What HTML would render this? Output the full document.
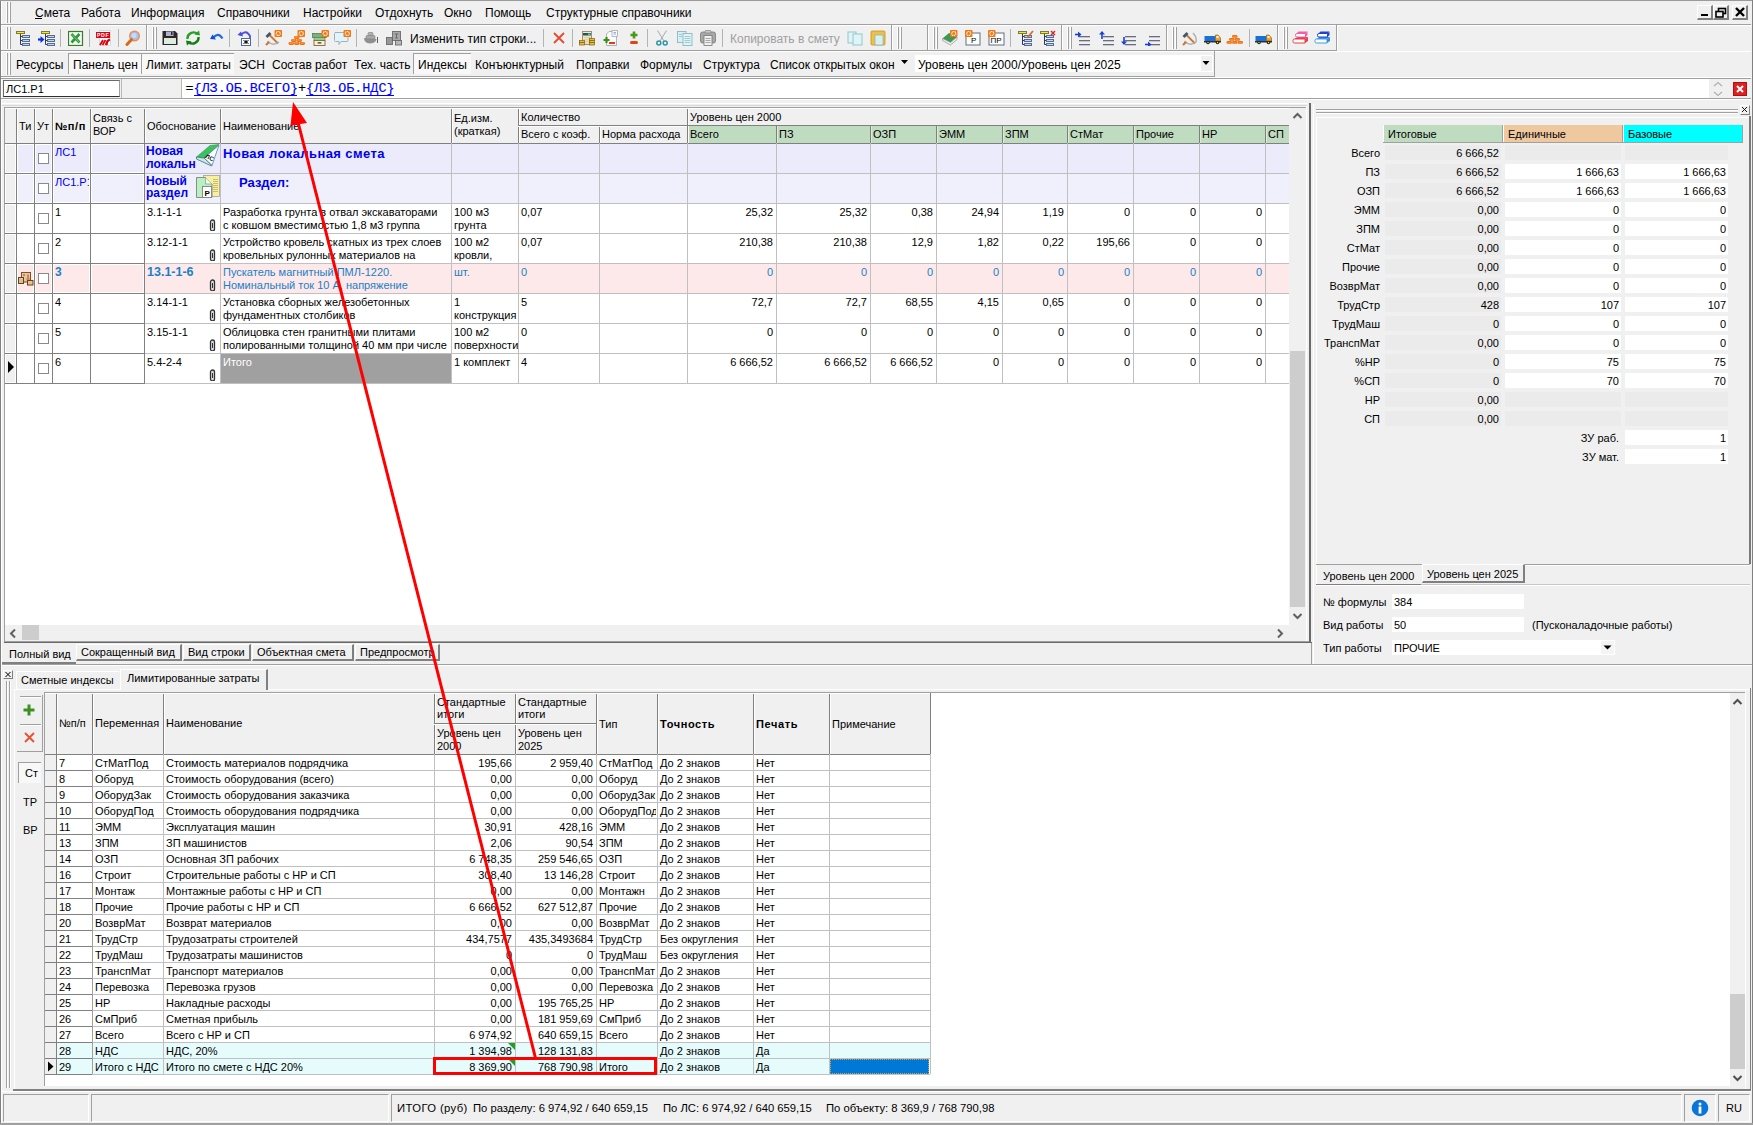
<!DOCTYPE html><html><head><meta charset="utf-8"><style>html,body{margin:0;padding:0;}body{width:1753px;height:1125px;overflow:hidden;position:relative;background:#f0f0f0;font-family:"Liberation Sans",sans-serif;}.a{position:absolute;}.t{white-space:pre;line-height:normal;}</style></head><body><div class="a" style="left:0px;top:0px;width:1px;height:1125px;background:#808080;"></div><div class="a" style="left:1px;top:0px;width:1px;height:1125px;background:#fff;"></div><div class="a" style="left:0px;top:0px;width:1753px;height:1px;background:#9a9a9a;"></div><div class="a" style="left:1752px;top:0px;width:1px;height:1125px;background:#808080;"></div><div class="a" style="left:0px;top:1123px;width:1753px;height:2px;background:#a0a0a0;"></div><div class="a" style="left:6px;top:2px;width:1px;height:21px;background:#fff;"></div><div class="a" style="left:7px;top:2px;width:1px;height:21px;background:#a0a0a0;"></div><div class="a" style="left:9px;top:2px;width:1px;height:21px;background:#fff;"></div><div class="a" style="left:10px;top:2px;width:1px;height:21px;background:#a0a0a0;"></div><div class="a t" style="left:35px;top:6.14px;font-size:12px;color:#000;font-family:'Liberation Sans', sans-serif;">Смета</div><div class="a t" style="left:81px;top:6.14px;font-size:12px;color:#000;font-family:'Liberation Sans', sans-serif;">Работа</div><div class="a t" style="left:131px;top:6.14px;font-size:12px;color:#000;font-family:'Liberation Sans', sans-serif;">Информация</div><div class="a t" style="left:217px;top:6.14px;font-size:12px;color:#000;font-family:'Liberation Sans', sans-serif;">Справочники</div><div class="a t" style="left:303px;top:6.14px;font-size:12px;color:#000;font-family:'Liberation Sans', sans-serif;">Настройки</div><div class="a t" style="left:375px;top:6.14px;font-size:12px;color:#000;font-family:'Liberation Sans', sans-serif;">Отдохнуть</div><div class="a t" style="left:444px;top:6.14px;font-size:12px;color:#000;font-family:'Liberation Sans', sans-serif;">Окно</div><div class="a t" style="left:485px;top:6.14px;font-size:12px;color:#000;font-family:'Liberation Sans', sans-serif;">Помощь</div><div class="a t" style="left:546px;top:6.14px;font-size:12px;color:#000;font-family:'Liberation Sans', sans-serif;">Структурные справочники</div><div class="a" style="left:35px;top:18px;width:7px;height:1px;background:#000;"></div><div class="a" style="left:1px;top:24px;width:1750px;height:1px;background:#a0a0a0;"></div><div class="a" style="left:2px;top:25px;width:1749px;height:1px;background:#fff;"></div><div class="a" style="left:1697px;top:5px;width:16px;height:15px;background:#f0f0f0;border-top:1px solid #fff;border-left:1px solid #fff;border-right:2px solid #808080;border-bottom:2px solid #808080;box-sizing:border-box;"></div><div class="a" style="left:1713px;top:5px;width:16px;height:15px;background:#f0f0f0;border-top:1px solid #fff;border-left:1px solid #fff;border-right:2px solid #808080;border-bottom:2px solid #808080;box-sizing:border-box;"></div><div class="a" style="left:1732px;top:5px;width:16px;height:15px;background:#f0f0f0;border-top:1px solid #fff;border-left:1px solid #fff;border-right:2px solid #808080;border-bottom:2px solid #808080;box-sizing:border-box;"></div><svg class="a" style="left:1697px;top:5px" width="16" height="15" viewBox="0 0 16 15"><rect x="4" y="9" width="7" height="2" fill="#000"/></svg><svg class="a" style="left:1713px;top:5px" width="16" height="15" viewBox="0 0 16 15"><rect x="5.5" y="3.5" width="7" height="5" fill="none" stroke="#000" stroke-width="1.6"/><rect x="3" y="6.5" width="7" height="5.5" fill="#f0f0f0" stroke="#000" stroke-width="1.6"/></svg><svg class="a" style="left:1732px;top:5px" width="17" height="15" viewBox="0 0 17 15"><path d="M4 3 L12 11 M12 3 L4 11" stroke="#000" stroke-width="2.4"/></svg><div class="a" style="left:1px;top:50px;width:1336px;height:1px;background:#a0a0a0;"></div><div class="a" style="left:2px;top:51px;width:1749px;height:1px;background:#fff;"></div><div class="a" style="left:146px;top:25px;width:1px;height:26px;background:#a0a0a0;"></div><div class="a" style="left:147px;top:26px;width:1px;height:24px;background:#fff;"></div><div class="a" style="left:6px;top:27px;width:1px;height:22px;background:#fff;"></div><div class="a" style="left:7px;top:27px;width:1px;height:22px;background:#a0a0a0;"></div><div class="a" style="left:9px;top:27px;width:1px;height:22px;background:#fff;"></div><div class="a" style="left:10px;top:27px;width:1px;height:22px;background:#a0a0a0;"></div><div class="a" style="left:891px;top:25px;width:1px;height:26px;background:#a0a0a0;"></div><div class="a" style="left:892px;top:26px;width:1px;height:24px;background:#fff;"></div><div class="a" style="left:152px;top:27px;width:1px;height:22px;background:#fff;"></div><div class="a" style="left:153px;top:27px;width:1px;height:22px;background:#a0a0a0;"></div><div class="a" style="left:155px;top:27px;width:1px;height:22px;background:#fff;"></div><div class="a" style="left:156px;top:27px;width:1px;height:22px;background:#a0a0a0;"></div><div class="a" style="left:927px;top:25px;width:1px;height:26px;background:#a0a0a0;"></div><div class="a" style="left:928px;top:26px;width:1px;height:24px;background:#fff;"></div><div class="a" style="left:897px;top:27px;width:1px;height:22px;background:#fff;"></div><div class="a" style="left:898px;top:27px;width:1px;height:22px;background:#a0a0a0;"></div><div class="a" style="left:900px;top:27px;width:1px;height:22px;background:#fff;"></div><div class="a" style="left:901px;top:27px;width:1px;height:22px;background:#a0a0a0;"></div><div class="a" style="left:1061px;top:25px;width:1px;height:26px;background:#a0a0a0;"></div><div class="a" style="left:1062px;top:26px;width:1px;height:24px;background:#fff;"></div><div class="a" style="left:933px;top:27px;width:1px;height:22px;background:#fff;"></div><div class="a" style="left:934px;top:27px;width:1px;height:22px;background:#a0a0a0;"></div><div class="a" style="left:936px;top:27px;width:1px;height:22px;background:#fff;"></div><div class="a" style="left:937px;top:27px;width:1px;height:22px;background:#a0a0a0;"></div><div class="a" style="left:1166px;top:25px;width:1px;height:26px;background:#a0a0a0;"></div><div class="a" style="left:1167px;top:26px;width:1px;height:24px;background:#fff;"></div><div class="a" style="left:1067px;top:27px;width:1px;height:22px;background:#fff;"></div><div class="a" style="left:1068px;top:27px;width:1px;height:22px;background:#a0a0a0;"></div><div class="a" style="left:1070px;top:27px;width:1px;height:22px;background:#fff;"></div><div class="a" style="left:1071px;top:27px;width:1px;height:22px;background:#a0a0a0;"></div><div class="a" style="left:1277px;top:25px;width:1px;height:26px;background:#a0a0a0;"></div><div class="a" style="left:1278px;top:26px;width:1px;height:24px;background:#fff;"></div><div class="a" style="left:1172px;top:27px;width:1px;height:22px;background:#fff;"></div><div class="a" style="left:1173px;top:27px;width:1px;height:22px;background:#a0a0a0;"></div><div class="a" style="left:1175px;top:27px;width:1px;height:22px;background:#fff;"></div><div class="a" style="left:1176px;top:27px;width:1px;height:22px;background:#a0a0a0;"></div><div class="a" style="left:1336px;top:25px;width:1px;height:26px;background:#a0a0a0;"></div><div class="a" style="left:1337px;top:26px;width:1px;height:24px;background:#fff;"></div><div class="a" style="left:1283px;top:27px;width:1px;height:22px;background:#fff;"></div><div class="a" style="left:1284px;top:27px;width:1px;height:22px;background:#a0a0a0;"></div><div class="a" style="left:1286px;top:27px;width:1px;height:22px;background:#fff;"></div><div class="a" style="left:1287px;top:27px;width:1px;height:22px;background:#a0a0a0;"></div><div class="a" style="left:60px;top:29px;width:1px;height:18px;background:#b4b4b4;"></div><div class="a" style="left:89px;top:29px;width:1px;height:18px;background:#b4b4b4;"></div><div class="a" style="left:118px;top:29px;width:1px;height:18px;background:#b4b4b4;"></div><div class="a" style="left:229px;top:29px;width:1px;height:18px;background:#b4b4b4;"></div><div class="a" style="left:258px;top:29px;width:1px;height:18px;background:#b4b4b4;"></div><div class="a" style="left:356px;top:29px;width:1px;height:18px;background:#b4b4b4;"></div><div class="a" style="left:543px;top:29px;width:1px;height:18px;background:#b4b4b4;"></div><div class="a" style="left:572px;top:29px;width:1px;height:18px;background:#b4b4b4;"></div><div class="a" style="left:647px;top:29px;width:1px;height:18px;background:#b4b4b4;"></div><div class="a" style="left:722px;top:29px;width:1px;height:18px;background:#b4b4b4;"></div><div class="a" style="left:1010px;top:29px;width:1px;height:18px;background:#b4b4b4;"></div><div class="a" style="left:1249px;top:29px;width:1px;height:18px;background:#b4b4b4;"></div><svg class="a" style="left:16px;top:30px" width="17" height="16" viewBox="0 0 17 16"><rect x="0.5" y="1.5" width="8" height="2" fill="#f8f000" stroke="#807840" stroke-width="1"/><path d="M4.5 4 V14.5 H6 M4.5 6.5 H6 M4.5 10.5 H6" stroke="#283868" stroke-width="1" fill="none"/><rect x="6.5" y="5.5" width="7" height="2" fill="#b8d8f8" stroke="#5a6a90" stroke-width="1"/><rect x="6.5" y="9.5" width="7" height="2" fill="#b8d8f8" stroke="#5a6a90" stroke-width="1"/><rect x="6.5" y="13.5" width="7" height="2" fill="#b8d8f8" stroke="#5a6a90" stroke-width="1"/></svg><svg class="a" style="left:38px;top:30px" width="17" height="16" viewBox="0 0 17 16"><rect x="3.5" y="1.5" width="8" height="2" fill="#f8f000" stroke="#807840" stroke-width="1"/><path d="M7.5 4 V14.5 H9 M7.5 6.5 H9 M7.5 10.5 H9" stroke="#283868" stroke-width="1" fill="none"/><rect x="9.5" y="5.5" width="7" height="2" fill="#b8d8f8" stroke="#5a6a90" stroke-width="1"/><rect x="9.5" y="9.5" width="7" height="2" fill="#b8d8f8" stroke="#5a6a90" stroke-width="1"/><rect x="9.5" y="13.5" width="7" height="2" fill="#b8d8f8" stroke="#5a6a90" stroke-width="1"/><path d="M0 9.5 H3.5" stroke="#1030e0" stroke-width="2.2"/><path d="M2.5 6 L6.5 9.5 L2.5 13Z" fill="#1030e0"/></svg><svg class="a" style="left:68px;top:30px" width="16" height="16" viewBox="0 0 16 16"><rect x="0.5" y="1.5" width="14" height="14" fill="#f4f8f0" stroke="#3a7a2a" stroke-width="1.2"/><path d="M3.5 4 L11.5 12.5 M11.5 4 L3.5 12.5" stroke="#2a9a3a" stroke-width="2.6"/><path d="M4 4.5 L11 12" stroke="#90d090" stroke-width="0.8"/></svg><svg class="a" style="left:96px;top:30px" width="16" height="16" viewBox="0 0 16 16"><rect x="3.5" y="0.5" width="11" height="15" fill="#fff" stroke="#c8d8d8" stroke-width="0.8"/><rect x="0" y="2" width="14" height="6" fill="#e00010"/><text x="1" y="7" font-size="5.2" font-family="Liberation Sans" font-weight="700" fill="#fff" letter-spacing="0.6">PDF</text><path d="M4 15 L7 10 M6.5 15 L9.5 10 M9.5 15 L12 10.5" stroke="#e00010" stroke-width="1.8"/><path d="M14 9.5 Q10 11 11 15" stroke="#e00010" stroke-width="2" fill="none"/></svg><svg class="a" style="left:125px;top:30px" width="16" height="16" viewBox="0 0 16 16"><circle cx="9.5" cy="6" r="4.8" fill="#a8c0f0" stroke="#e89050" stroke-width="1.4"/><circle cx="9" cy="5.5" r="2.5" fill="#c8d8f8"/><path d="M2 14.5 L6.5 9.5" stroke="#d86a18" stroke-width="3" stroke-linecap="round"/></svg><svg class="a" style="left:162px;top:30px" width="16" height="16" viewBox="0 0 16 16"><path d="M0.5 1 H13 L15.5 3.5 V15 H0.5Z" fill="#282828"/><rect x="4" y="1.5" width="7.5" height="4.5" fill="#b0b0d0"/><rect x="9" y="2" width="1.5" height="3" fill="#282828"/><rect x="2" y="8" width="12" height="6" fill="#d8eee8"/><rect x="2" y="8" width="12" height="1.5" fill="#f8e0b8"/></svg><svg class="a" style="left:185px;top:30px" width="16" height="16" viewBox="0 0 16 16"><path d="M12.5 4 A6 6 0 0 0 2.5 9" stroke="#28a028" stroke-width="2.4" fill="none"/><path d="M3.5 12 A6 6 0 0 0 13.5 7" stroke="#108010" stroke-width="2.4" fill="none"/><path d="M9.5 4.5 L15 5.5 L14 0.5Z" fill="#28a028"/><path d="M6.5 11.5 L1 10.5 L2 15.5Z" fill="#108010"/></svg><svg class="a" style="left:209px;top:30px" width="16" height="16" viewBox="0 0 16 16"><path d="M4 8 Q9 1.5 13.5 8.5" stroke="#1a6ae0" stroke-width="2.2" fill="none"/><path d="M1 9 L7 9.5 L3.5 4.5Z" fill="#1050d0"/></svg><svg class="a" style="left:237px;top:30px" width="16" height="16" viewBox="0 0 16 16"><path d="M4 5 Q9 -1 13 6 V9" stroke="#5050e0" stroke-width="1.8" fill="none"/><path d="M0.5 5 L6 6.5 L4 1.5Z" fill="#4848e0"/><rect x="4.5" y="8.5" width="9" height="7" fill="#fff" stroke="#5068a0" stroke-width="1"/><path d="M6.5 10.5 L11.5 13.5 M11.5 10.5 L6.5 13.5 M9 10 V14" stroke="#000" stroke-width="1"/></svg><svg class="a" style="left:265px;top:30px" width="18" height="16" viewBox="0 0 18 16"><path d="M4 4.5 L13 13.5" stroke="#c87830" stroke-width="1.8"/><path d="M1.5 7 L5.5 3" stroke="#405868" stroke-width="2.8"/><path d="M2.5 11 Q8 17 14 12" stroke="#a8b0b8" stroke-width="1.4" fill="none"/><path d="M1 15 L4 12" stroke="#d07020" stroke-width="2"/><rect x="9.5" y="0" width="7.5" height="7" rx="1" fill="#f07810"/><circle cx="13.25" cy="3.5" r="2" fill="none" stroke="#fff" stroke-width="1.2" stroke-dasharray="1 0.6"/></svg><svg class="a" style="left:288px;top:30px" width="17" height="16" viewBox="0 0 17 16"><rect x="0.5" y="12" width="5.5" height="3" rx="1.4" fill="#f07010"/><rect x="1.5" y="12.6" width="3.5" height="1" rx="0.5" fill="#f8a860"/><rect x="6" y="12" width="5.5" height="3" rx="1.4" fill="#f07010"/><rect x="7" y="12.6" width="3.5" height="1" rx="0.5" fill="#f8a860"/><rect x="11.5" y="12" width="5.5" height="3" rx="1.4" fill="#f07010"/><rect x="12.5" y="12.6" width="3.5" height="1" rx="0.5" fill="#f8a860"/><rect x="3" y="9" width="5.5" height="3" rx="1.4" fill="#f07010"/><rect x="4" y="9.6" width="3.5" height="1" rx="0.5" fill="#f8a860"/><rect x="8.5" y="9" width="5.5" height="3" rx="1.4" fill="#f07010"/><rect x="9.5" y="9.6" width="3.5" height="1" rx="0.5" fill="#f8a860"/><rect x="6" y="6" width="5.5" height="3" rx="1.4" fill="#f07010"/><rect x="7" y="6.6" width="3.5" height="1" rx="0.5" fill="#f8a860"/><rect x="9.5" y="0" width="7.5" height="7" rx="1" fill="#f07810"/><circle cx="13.25" cy="3.5" r="2" fill="none" stroke="#fff" stroke-width="1.2" stroke-dasharray="1 0.6"/></svg><svg class="a" style="left:312px;top:30px" width="17" height="16" viewBox="0 0 17 16"><rect x="0.5" y="3.5" width="14" height="4" fill="#80b080" stroke="#508050" stroke-width="0.8"/><rect x="2" y="7.5" width="11" height="3" fill="#98c898" stroke="#508050" stroke-width="0.6"/><rect x="2" y="10.5" width="11" height="5" fill="#f8f0d0" stroke="#806840" stroke-width="0.9"/><rect x="5.5" y="12.2" width="4" height="1.4" rx="0.7" fill="#204020"/><rect x="9.5" y="0" width="7.5" height="7" rx="1" fill="#f07810"/><circle cx="13.25" cy="3.5" r="2" fill="none" stroke="#fff" stroke-width="1.2" stroke-dasharray="1 0.6"/></svg><svg class="a" style="left:334px;top:30px" width="17" height="16" viewBox="0 0 17 16"><path d="M1 2.5 H13 Q14 2.5 14 3.5 V10.5 Q14 11.5 13 11.5 H7 L5 14.5 V11.5 H1.5 Q0.5 11.5 0.5 10.5 V3.5 Q0.5 2.5 1.5 2.5Z" fill="#e0f4fc" stroke="#a0b0b8" stroke-width="1"/><rect x="9.5" y="0" width="7.5" height="7" rx="1" fill="#f07810"/><circle cx="13.25" cy="3.5" r="2" fill="none" stroke="#fff" stroke-width="1.2" stroke-dasharray="1 0.6"/></svg><svg class="a" style="left:362px;top:30px" width="17" height="16" viewBox="0 0 17 16"><path d="M2 8 Q2 13 8 13.5 Q14 13 14.5 9 Z" fill="#909090"/><rect x="4" y="5.5" width="9" height="3.5" rx="1" fill="#a8a8a8" stroke="#808080" stroke-width="0.6"/><rect x="6" y="2.5" width="5" height="3" rx="1" fill="#b0b0b0" stroke="#808080" stroke-width="0.6"/><path d="M15.5 7 V13" stroke="#606060" stroke-width="1"/></svg><svg class="a" style="left:386px;top:30px" width="17" height="16" viewBox="0 0 17 16"><rect x="6.5" y="1.5" width="8" height="9" fill="#a8a8a8" stroke="#6a6a6a" stroke-width="0.9"/><path d="M8.5 4 H12.5 M10.5 4 V8 M9 8 H12" stroke="#606060" stroke-width="0.8"/><rect x="0.5" y="7.5" width="6" height="7" fill="#989898" stroke="#6a6a6a" stroke-width="0.9"/><rect x="9.5" y="10.5" width="6" height="4.5" fill="#b8b8b8" stroke="#6a6a6a" stroke-width="0.9"/></svg><div class="a t" style="left:410px;top:32.14px;font-size:12px;color:#000;font-family:'Liberation Sans', sans-serif;">Изменить тип строки...</div><svg class="a" style="left:552px;top:30px" width="16" height="16" viewBox="0 0 16 16"><path d="M2 3 L12 13 M12 3 L2 13" stroke="#e84830" stroke-width="1.8"/></svg><svg class="a" style="left:579px;top:30px" width="17" height="16" viewBox="0 0 17 16"><rect x="3.5" y="1.5" width="9" height="13" fill="#f4ecc8" stroke="#a08070" stroke-width="0.9"/><rect x="4" y="3" width="8" height="2.5" fill="#205858"/><rect x="9" y="3.5" width="2.5" height="1.5" fill="#40d0e0"/><path d="M4 7.5 H12 M4 9.5 H12 M4 11.5 H12 M6 6 V14 M8 6 V14 M10 6 V14" stroke="#d8c898" stroke-width="0.6"/><rect x="0.5" y="10.5" width="5" height="2" fill="#e0c040" stroke="#806010" stroke-width="0.7"/><rect x="0.5" y="12.5" width="5" height="2.5" fill="#e0c040" stroke="#806010" stroke-width="0.7"/><rect x="10.5" y="8.5" width="5" height="2" fill="#e0c040" stroke="#806010" stroke-width="0.7"/><rect x="10.5" y="10.5" width="5" height="2" fill="#e0c040" stroke="#806010" stroke-width="0.7"/><rect x="10.5" y="12.5" width="5" height="2.5" fill="#e0c040" stroke="#806010" stroke-width="0.7"/></svg><svg class="a" style="left:603px;top:30px" width="16" height="16" viewBox="0 0 16 16"><path d="M3.5 4 L6 1.5 H13.5 V15.5 H3.5Z" fill="#fafafa" stroke="#a8a8a8" stroke-width="0.9"/><rect x="9" y="0.5" width="5.5" height="6" fill="#f4f8ff" stroke="#a0a0a0" stroke-width="0.7"/><path d="M10.5 2.5 H13 M10.5 4 H13" stroke="#5a7ae0" stroke-width="0.6"/><path d="M0.5 10 H6.5 M3.5 7 V13" stroke="#3a9018" stroke-width="2.2"/><rect x="6" y="12" width="6" height="2" fill="#e83818"/></svg><svg class="a" style="left:629px;top:30px" width="10" height="16" viewBox="0 0 10 16"><path d="M1.5 5 H8.5 M5 1.5 V8.5" stroke="#4a9818" stroke-width="2.6"/><rect x="1" y="11" width="8" height="3" rx="1.5" fill="#e84018"/></svg><svg class="a" style="left:655px;top:30px" width="15" height="16" viewBox="0 0 15 16"><path d="M2.5 0.5 L9 11 M11.5 0.5 L5 11" stroke="#a8a8a8" stroke-width="1"/><circle cx="3.8" cy="13" r="2" fill="none" stroke="#2898a8" stroke-width="1.5"/><circle cx="10.2" cy="13" r="2" fill="none" stroke="#2898a8" stroke-width="1.5"/></svg><svg class="a" style="left:677px;top:30px" width="16" height="16" viewBox="0 0 16 16"><rect x="0.5" y="1.5" width="8.5" height="11" fill="#d8f0f4" stroke="#88b8c0" stroke-width="0.9"/><rect x="6" y="3.5" width="9" height="12" fill="#e0f4f8" stroke="#88b8c0" stroke-width="0.9"/><path d="M7.5 6.5 H13.5 M7.5 8.5 H13.5 M7.5 10.5 H13.5 M7.5 12.5 H13.5" stroke="#88b8c0" stroke-width="0.7"/><path d="M2 4.5 H5 M2 6.5 H5" stroke="#88b8c0" stroke-width="0.7"/></svg><svg class="a" style="left:700px;top:30px" width="16" height="16" viewBox="0 0 16 16"><rect x="0.5" y="2" width="15" height="11" rx="2" fill="#a8a8a8" stroke="#787878" stroke-width="0.8"/><rect x="5" y="0.5" width="6" height="2.5" rx="1" fill="#c8c8c8" stroke="#787878" stroke-width="0.6"/><rect x="4" y="5.5" width="8" height="10" fill="#f0f0f0" stroke="#787878" stroke-width="0.8"/><path d="M5.5 8.5 H10.5 M5.5 10.5 H10.5 M5.5 12.5 H10.5" stroke="#888" stroke-width="0.7"/></svg><div class="a t" style="left:730px;top:32.14px;font-size:12px;color:#a0a0a0;font-family:'Liberation Sans', sans-serif;">Копировать в смету</div><svg class="a" style="left:847px;top:30px" width="16" height="16" viewBox="0 0 16 16"><rect x="1" y="2" width="8" height="11" fill="#e0f4f8" stroke="#90c8d0" stroke-width="1"/><rect x="6" y="4" width="9" height="11" fill="#e0f4f8" stroke="#90c8d0" stroke-width="1"/></svg><svg class="a" style="left:870px;top:30px" width="16" height="16" viewBox="0 0 16 16"><rect x="1" y="1" width="14" height="14" rx="1" fill="#f0c040" stroke="#c89020" stroke-width="0.8"/><rect x="5" y="5" width="8" height="10" fill="#d8f0f4" stroke="#88b8c0" stroke-width="0.8"/></svg><svg class="a" style="left:942px;top:30px" width="16" height="16" viewBox="0 0 16 16"><path d="M0.5 8.5 L7 3 L15 7 L8.5 12.5Z" fill="#3a9a50"/><path d="M0.5 8.5 V10.5 L8.5 15 L15 9.5 V7 L8.5 12.5Z" fill="#f0f0f0" stroke="#909090" stroke-width="0.7"/><rect x="8" y="0" width="7.5" height="7" rx="1" fill="#f07810"/><circle cx="11.75" cy="3.5" r="2" fill="none" stroke="#fff" stroke-width="1.2" stroke-dasharray="1 0.6"/></svg><svg class="a" style="left:965px;top:30px" width="16" height="16" viewBox="0 0 16 16"><rect x="1" y="3" width="14" height="12" fill="#fff" stroke="#5a7080" stroke-width="1"/><text x="6" y="13" font-size="8" font-family="Liberation Sans" fill="#000">P</text><rect x="0" y="0" width="7.5" height="7" rx="1" fill="#f07810"/><circle cx="3.75" cy="3.5" r="2" fill="none" stroke="#fff" stroke-width="1.2" stroke-dasharray="1 0.6"/></svg><svg class="a" style="left:988px;top:30px" width="17" height="16" viewBox="0 0 17 16"><rect x="1" y="3" width="15" height="12" fill="#fff" stroke="#5a7080" stroke-width="1"/><text x="2.5" y="13" font-size="8" font-family="Liberation Sans" fill="#000">ПР</text><rect x="0" y="0" width="7.5" height="7" rx="1" fill="#f07810"/><circle cx="3.75" cy="3.5" r="2" fill="none" stroke="#fff" stroke-width="1.2" stroke-dasharray="1 0.6"/></svg><svg class="a" style="left:1018px;top:30px" width="17" height="16" viewBox="0 0 17 16"><rect x="0.5" y="1.5" width="8" height="2" fill="#f8f000" stroke="#807840" stroke-width="1"/><path d="M4.5 4 V14.5 H6 M4.5 6.5 H6 M4.5 10.5 H6" stroke="#283868" stroke-width="1" fill="none"/><rect x="6.5" y="5.5" width="7" height="2" fill="#b8d8f8" stroke="#5a6a90" stroke-width="1"/><rect x="6.5" y="9.5" width="7" height="2" fill="#b8d8f8" stroke="#5a6a90" stroke-width="1"/><rect x="6.5" y="13.5" width="7" height="2" fill="#b8d8f8" stroke="#5a6a90" stroke-width="1"/><path d="M9 8 L15 1" stroke="#d07030" stroke-width="1.8"/></svg><svg class="a" style="left:1040px;top:30px" width="17" height="16" viewBox="0 0 17 16"><rect x="0.5" y="1.5" width="8" height="2" fill="#f8f000" stroke="#807840" stroke-width="1"/><path d="M4.5 4 V14.5 H6 M4.5 6.5 H6 M4.5 10.5 H6" stroke="#283868" stroke-width="1" fill="none"/><rect x="6.5" y="5.5" width="7" height="2" fill="#b8d8f8" stroke="#5a6a90" stroke-width="1"/><rect x="6.5" y="9.5" width="7" height="2" fill="#b8d8f8" stroke="#5a6a90" stroke-width="1"/><rect x="6.5" y="13.5" width="7" height="2" fill="#b8d8f8" stroke="#5a6a90" stroke-width="1"/><path d="M11 1 L15 5 M15 1 L11 5" stroke="#e02020" stroke-width="1.4"/></svg><svg class="a" style="left:1075px;top:30px" width="16" height="16" viewBox="0 0 16 16"><rect x="4" y="6" width="11" height="1.3" fill="#6a6a80"/><rect x="4" y="10" width="11" height="1.3" fill="#6a6a80"/><rect x="4" y="14" width="11" height="1.3" fill="#6a6a80"/><path d="M0 4.5 H4" stroke="#1a40d0" stroke-width="1.6"/><path d="M3 1.5 L6.5 4.5 L3 7.5Z" fill="#1a40d0"/></svg><svg class="a" style="left:1099px;top:30px" width="16" height="16" viewBox="0 0 16 16"><rect x="4" y="6" width="11" height="1.3" fill="#6a6a80"/><rect x="4" y="10" width="11" height="1.3" fill="#6a6a80"/><rect x="4" y="14" width="11" height="1.3" fill="#6a6a80"/><path d="M3 9 V4" stroke="#1a40d0" stroke-width="1.6"/><path d="M0 4.5 L3 1 L6 4.5Z" fill="#1a40d0"/></svg><svg class="a" style="left:1121px;top:30px" width="16" height="16" viewBox="0 0 16 16"><rect x="4" y="6" width="11" height="1.3" fill="#6a6a80"/><rect x="4" y="10" width="11" height="1.3" fill="#6a6a80"/><rect x="4" y="14" width="11" height="1.3" fill="#6a6a80"/><path d="M3 7 V12" stroke="#1a40d0" stroke-width="1.6"/><path d="M0 11.5 L3 15 L6 11.5Z" fill="#1a40d0"/></svg><svg class="a" style="left:1145px;top:30px" width="16" height="16" viewBox="0 0 16 16"><rect x="4" y="6" width="11" height="1.3" fill="#6a6a80"/><rect x="4" y="10" width="11" height="1.3" fill="#6a6a80"/><rect x="4" y="14" width="11" height="1.3" fill="#6a6a80"/><path d="M0 14.5 H4" stroke="#1a40d0" stroke-width="1.6"/><path d="M3 11.5 L6.5 14.5 L3 17.5Z" fill="#1a40d0"/></svg><svg class="a" style="left:1182px;top:30px" width="16" height="16" viewBox="0 0 16 16"><path d="M4 4.5 L13 13.5" stroke="#c87830" stroke-width="1.8"/><path d="M1.5 7 L5.5 3" stroke="#405868" stroke-width="2.8"/><path d="M2.5 11 Q8 17 14 12 Q15 7 11 3" stroke="#a8b0b8" stroke-width="1.4" fill="none"/><path d="M1 15 L4 12" stroke="#d07020" stroke-width="2"/></svg><svg class="a" style="left:1204px;top:30px" width="18" height="16" viewBox="0 0 18 16"><rect x="0.5" y="6" width="11" height="5" fill="#1a70d8"/><path d="M11.5 5 H14 L16.5 8 V11 H11.5Z" fill="#f8a020" stroke="#805010" stroke-width="0.6"/><rect x="12.5" y="6" width="2" height="2" fill="#fff"/><rect x="0" y="11" width="17" height="1.5" fill="#303030"/><circle cx="4" cy="12.5" r="1.8" fill="#202020"/><circle cx="4" cy="12.5" r="0.7" fill="#f0f000"/><circle cx="13.5" cy="12.5" r="1.8" fill="#202020"/><circle cx="13.5" cy="12.5" r="0.7" fill="#f0f000"/></svg><svg class="a" style="left:1226px;top:30px" width="17" height="16" viewBox="0 0 17 16"><rect x="0.5" y="11" width="5.5" height="3" rx="1.4" fill="#f07010"/><rect x="1.5" y="12.6" width="3.5" height="1" rx="0.5" fill="#f8a860"/><rect x="6" y="11" width="5.5" height="3" rx="1.4" fill="#f07010"/><rect x="7" y="12.6" width="3.5" height="1" rx="0.5" fill="#f8a860"/><rect x="11.5" y="11" width="5.5" height="3" rx="1.4" fill="#f07010"/><rect x="12.5" y="12.6" width="3.5" height="1" rx="0.5" fill="#f8a860"/><rect x="3" y="8" width="5.5" height="3" rx="1.4" fill="#f07010"/><rect x="4" y="9.6" width="3.5" height="1" rx="0.5" fill="#f8a860"/><rect x="8.5" y="8" width="5.5" height="3" rx="1.4" fill="#f07010"/><rect x="9.5" y="9.6" width="3.5" height="1" rx="0.5" fill="#f8a860"/><rect x="6" y="5" width="5.5" height="3" rx="1.4" fill="#f07010"/><rect x="7" y="6.6" width="3.5" height="1" rx="0.5" fill="#f8a860"/></svg><svg class="a" style="left:1255px;top:30px" width="18" height="16" viewBox="0 0 18 16"><rect x="0.5" y="6" width="11" height="5" fill="#1a70d8"/><path d="M11.5 5 H14 L16.5 8 V11 H11.5Z" fill="#f8a020" stroke="#805010" stroke-width="0.6"/><rect x="12.5" y="6" width="2" height="2" fill="#fff"/><rect x="0" y="11" width="17" height="1.5" fill="#303030"/><circle cx="4" cy="12.5" r="1.8" fill="#202020"/><circle cx="4" cy="12.5" r="0.7" fill="#f0f000"/><circle cx="13.5" cy="12.5" r="1.8" fill="#202020"/><circle cx="13.5" cy="12.5" r="0.7" fill="#f0f000"/></svg><svg class="a" style="left:1292px;top:30px" width="17" height="16" viewBox="0 0 17 16"><path d="M2.5 9 L5.5 7 H16 L13 9Z" fill="#e84050"/><path d="M1 10.5 Q1 9 2.5 9 H13 L13 13 H2.5 Q1 13 1 11.5Z" fill="#fff" stroke="#e04040" stroke-width="1"/><path d="M13 9 L16 7 V11 L13 13Z" fill="#e84050"/><path d="M4.5 3.5 L6.5 1.5 H15.5 L13.5 3.5Z" fill="#f060a8"/><path d="M3.5 5 Q3.5 3.5 5 3.5 H13.5 V7 H5 Q3.5 7 3.5 5.5Z" fill="#fff" stroke="#f060a8" stroke-width="1"/><path d="M13.5 3.5 L15.5 1.5 V5 L13.5 7Z" fill="#f060a8"/></svg><svg class="a" style="left:1314px;top:30px" width="17" height="16" viewBox="0 0 17 16"><path d="M2.5 9 L5.5 7 H16 L13 9Z" fill="#3890e0"/><path d="M1 10.5 Q1 9 2.5 9 H13 L13 13 H2.5 Q1 13 1 11.5Z" fill="#fff" stroke="#30a0e0" stroke-width="1"/><path d="M13 9 L16 7 V11 L13 13Z" fill="#3890e0"/><path d="M4.5 3.5 L6.5 1.5 H15.5 L13.5 3.5Z" fill="#2040d0"/><path d="M3.5 5 Q3.5 3.5 5 3.5 H13.5 V7 H5 Q3.5 7 3.5 5.5Z" fill="#fff" stroke="#2040d0" stroke-width="1"/><path d="M13.5 3.5 L15.5 1.5 V5 L13.5 7Z" fill="#2040d0"/></svg><div class="a" style="left:1px;top:76px;width:1214px;height:1px;background:#a0a0a0;"></div><div class="a" style="left:2px;top:77px;width:1749px;height:1px;background:#fff;"></div><div class="a" style="left:1px;top:78px;width:1750px;height:1px;background:#a0a0a0;"></div><div class="a" style="left:6px;top:53px;width:1px;height:22px;background:#fff;"></div><div class="a" style="left:7px;top:53px;width:1px;height:22px;background:#a0a0a0;"></div><div class="a" style="left:9px;top:53px;width:1px;height:22px;background:#fff;"></div><div class="a" style="left:10px;top:53px;width:1px;height:22px;background:#a0a0a0;"></div><div class="a" style="left:1214px;top:51px;width:1px;height:26px;background:#a0a0a0;"></div><div class="a" style="left:68px;top:53px;width:73px;height:21px;background:#f8f8f8;border-top:1px solid #a0a0a0;border-left:1px solid #a0a0a0;box-sizing:border-box;"></div><div class="a" style="left:141px;top:53px;width:93px;height:21px;background:#f8f8f8;border-top:1px solid #a0a0a0;border-left:1px solid #a0a0a0;box-sizing:border-box;"></div><div class="a" style="left:413px;top:53px;width:58px;height:21px;background:#f8f8f8;border-top:1px solid #a0a0a0;border-left:1px solid #a0a0a0;box-sizing:border-box;"></div><div class="a t" style="left:16px;top:57.64px;font-size:12px;color:#000;font-family:'Liberation Sans', sans-serif;">Ресурсы</div><div class="a t" style="left:73px;top:57.64px;font-size:12px;color:#000;font-family:'Liberation Sans', sans-serif;">Панель цен</div><div class="a t" style="left:146px;top:57.64px;font-size:12px;color:#000;font-family:'Liberation Sans', sans-serif;">Лимит. затраты</div><div class="a t" style="left:239px;top:57.64px;font-size:12px;color:#000;font-family:'Liberation Sans', sans-serif;">ЭСН</div><div class="a t" style="left:272px;top:57.64px;font-size:12px;color:#000;font-family:'Liberation Sans', sans-serif;">Состав работ</div><div class="a t" style="left:354px;top:57.64px;font-size:12px;color:#000;font-family:'Liberation Sans', sans-serif;">Тех. часть</div><div class="a t" style="left:418px;top:57.64px;font-size:12px;color:#000;font-family:'Liberation Sans', sans-serif;">Индексы</div><div class="a t" style="left:475px;top:57.64px;font-size:12px;color:#000;font-family:'Liberation Sans', sans-serif;">Конъюнктурный</div><div class="a t" style="left:576px;top:57.64px;font-size:12px;color:#000;font-family:'Liberation Sans', sans-serif;">Поправки</div><div class="a t" style="left:640px;top:57.64px;font-size:12px;color:#000;font-family:'Liberation Sans', sans-serif;">Формулы</div><div class="a t" style="left:703px;top:57.64px;font-size:12px;color:#000;font-family:'Liberation Sans', sans-serif;">Структура</div><div class="a t" style="left:770px;top:57.64px;font-size:12px;color:#000;font-family:'Liberation Sans', sans-serif;">Список открытых окон</div><svg class="a" style="left:901px;top:60px" width="8" height="5" viewBox="0 0 8 5"><path d="M0 0 H7 L3.5 4Z" fill="#000"/></svg><div class="a" style="left:915px;top:55px;width:298px;height:17px;background:#fff;"></div><div class="a t" style="left:918px;top:57.64px;font-size:12px;color:#000;font-family:'Liberation Sans', sans-serif;">Уровень цен 2000/Уровень цен 2025</div><div class="a" style="left:1201px;top:56px;width:11px;height:15px;background:#f0f0f0;"></div><svg class="a" style="left:1202px;top:61px" width="9" height="5" viewBox="0 0 9 5"><path d="M0.5 0 H7.5 L4 4Z" fill="#000"/></svg><div class="a" style="left:3px;top:80px;width:117px;height:17px;background:#fff;border:1px solid #6a6a6a;border-right-color:#a0a0a0;border-bottom-color:#303030;box-sizing:border-box;"></div><div class="a t" style="left:6px;top:83.05px;font-size:11px;color:#000;font-family:'Liberation Sans', sans-serif;">ЛС1.Р1</div><div class="a" style="left:121px;top:79px;width:61px;height:19px;background:#f0f0f0;border-left:1px solid #b8b8b8;border-right:1px solid #b8b8b8;box-sizing:border-box;"></div><div class="a" style="left:182px;top:79px;width:1527px;height:20px;background:#fff;"></div><div class="a t" style="left:185.5px;top:80.88px;font-family:'Liberation Mono', monospace;font-size:13.4px;font-weight:400;-webkit-text-stroke:0.15px #0000ff;color:#0000ff;line-height:normal"><span style="color:#000;-webkit-text-stroke:0.15px #000">=</span>{ЛЗ.ОБ.ВСЕГО}<span style="color:#000;-webkit-text-stroke:0.15px #000">+</span>{ЛЗ.ОБ.НДС}</div><div class="a" style="left:194px;top:95px;width:103px;height:1px;background:#0000ff;"></div><div class="a" style="left:306px;top:95px;width:88px;height:1px;background:#0000ff;"></div><div class="a" style="left:1709px;top:79px;width:22px;height:20px;background:#f0f0f0;"></div><svg class="a" style="left:1711px;top:80px" width="14" height="18" viewBox="0 0 14 18"><path d="M3 6 L7 2.5 L11 6 M3 12 L7 15.5 L11 12" stroke="#b0b0b0" stroke-width="1.2" fill="none"/></svg><div class="a" style="left:1733px;top:82px;width:14px;height:14px;background:#e02020;border:1px solid #b01010;box-sizing:border-box;"></div><svg class="a" style="left:1733px;top:82px" width="14" height="14" viewBox="0 0 14 14"><path d="M4 4 L10 10 M10 4 L4 10" stroke="#fff" stroke-width="2"/></svg><div class="a" style="left:1px;top:98px;width:1750px;height:1px;background:#a0a0a0;"></div><div class="a" style="left:2px;top:99px;width:1749px;height:1px;background:#fff;"></div><div class="a" style="left:2px;top:103px;width:1305px;height:1px;background:#fff;"></div><div class="a" style="left:2px;top:105px;width:1305px;height:1px;background:#d8d8d8;"></div><div class="a" style="left:4px;top:107px;width:1302px;height:535px;background:#fff;"></div><div class="a" style="left:4px;top:107px;width:1302px;height:1px;background:#a0a0a0;"></div><div class="a" style="left:4px;top:107px;width:1px;height:535px;background:#a0a0a0;"></div><div class="a" style="left:1306px;top:106px;width:1px;height:537px;background:#fff;"></div><div class="a" style="left:1309px;top:103px;width:2px;height:540px;background:#6a6a6a;"></div><div class="a" style="left:1311px;top:643px;width:1px;height:22px;background:#a0a0a0;"></div><div class="a" style="left:4px;top:641px;width:1305px;height:1px;background:#a0a0a0;"></div><div class="a" style="left:4px;top:642px;width:1308px;height:1px;background:#6a6a6a;"></div><div class="a" style="left:5px;top:108px;width:1284px;height:35px;background:#f0f0f0;"></div><div class="a" style="left:687px;top:126px;width:602px;height:17px;background:#c0dcc0;"></div><div class="a" style="left:16px;top:108px;width:1px;height:35px;background:#808080;"></div><div class="a" style="left:17px;top:108px;width:1px;height:35px;background:#fff;"></div><div class="a" style="left:34px;top:108px;width:1px;height:35px;background:#808080;"></div><div class="a" style="left:35px;top:108px;width:1px;height:35px;background:#fff;"></div><div class="a" style="left:52px;top:108px;width:1px;height:35px;background:#808080;"></div><div class="a" style="left:53px;top:108px;width:1px;height:35px;background:#fff;"></div><div class="a" style="left:90px;top:108px;width:1px;height:35px;background:#808080;"></div><div class="a" style="left:91px;top:108px;width:1px;height:35px;background:#fff;"></div><div class="a" style="left:144px;top:108px;width:1px;height:35px;background:#808080;"></div><div class="a" style="left:145px;top:108px;width:1px;height:35px;background:#fff;"></div><div class="a" style="left:220px;top:108px;width:1px;height:35px;background:#808080;"></div><div class="a" style="left:221px;top:108px;width:1px;height:35px;background:#fff;"></div><div class="a" style="left:451px;top:108px;width:1px;height:35px;background:#808080;"></div><div class="a" style="left:452px;top:108px;width:1px;height:35px;background:#fff;"></div><div class="a" style="left:518px;top:108px;width:1px;height:35px;background:#808080;"></div><div class="a" style="left:519px;top:108px;width:1px;height:35px;background:#fff;"></div><div class="a" style="left:599px;top:125px;width:1px;height:18px;background:#808080;"></div><div class="a" style="left:600px;top:126px;width:1px;height:17px;background:#fff;"></div><div class="a" style="left:687px;top:108px;width:1px;height:35px;background:#808080;"></div><div class="a" style="left:688px;top:108px;width:1px;height:35px;background:#fff;"></div><div class="a" style="left:776px;top:125px;width:1px;height:18px;background:#808080;"></div><div class="a" style="left:777px;top:126px;width:1px;height:17px;background:#d8ecd8;"></div><div class="a" style="left:870px;top:125px;width:1px;height:18px;background:#808080;"></div><div class="a" style="left:871px;top:126px;width:1px;height:17px;background:#d8ecd8;"></div><div class="a" style="left:936px;top:125px;width:1px;height:18px;background:#808080;"></div><div class="a" style="left:937px;top:126px;width:1px;height:17px;background:#d8ecd8;"></div><div class="a" style="left:1002px;top:125px;width:1px;height:18px;background:#808080;"></div><div class="a" style="left:1003px;top:126px;width:1px;height:17px;background:#d8ecd8;"></div><div class="a" style="left:1067px;top:125px;width:1px;height:18px;background:#808080;"></div><div class="a" style="left:1068px;top:126px;width:1px;height:17px;background:#d8ecd8;"></div><div class="a" style="left:1133px;top:125px;width:1px;height:18px;background:#808080;"></div><div class="a" style="left:1134px;top:126px;width:1px;height:17px;background:#d8ecd8;"></div><div class="a" style="left:1199px;top:125px;width:1px;height:18px;background:#808080;"></div><div class="a" style="left:1200px;top:126px;width:1px;height:17px;background:#d8ecd8;"></div><div class="a" style="left:1265px;top:125px;width:1px;height:18px;background:#808080;"></div><div class="a" style="left:1266px;top:126px;width:1px;height:17px;background:#d8ecd8;"></div><div class="a" style="left:518px;top:125px;width:771px;height:1px;background:#808080;"></div><div class="a" style="left:518px;top:126px;width:169px;height:1px;background:#fff;"></div><div class="a" style="left:5px;top:143px;width:1284px;height:1px;background:#808080;"></div><div class="a" style="left:5px;top:108px;width:1284px;height:1px;background:#fff;"></div><div class="a t" style="left:19px;top:120.05px;font-size:11px;color:#000;font-family:'Liberation Sans', sans-serif;">Ти</div><div class="a t" style="left:37px;top:120.05px;font-size:11px;color:#000;font-family:'Liberation Sans', sans-serif;">Ут</div><div class="a t" style="left:55px;top:120.05px;font-size:11px;color:#000;font-family:'Liberation Sans', sans-serif;font-weight:700;letter-spacing:0.6px;">№п/п</div><div class="a t" style="left:93px;top:112.05px;font-size:11px;color:#000;font-family:'Liberation Sans', sans-serif;">Связь с</div><div class="a t" style="left:93px;top:125.05px;font-size:11px;color:#000;font-family:'Liberation Sans', sans-serif;">ВОР</div><div class="a t" style="left:147px;top:120.05px;font-size:11px;color:#000;font-family:'Liberation Sans', sans-serif;">Обоснование</div><div class="a t" style="left:223px;top:120.05px;font-size:11px;color:#000;font-family:'Liberation Sans', sans-serif;">Наименование</div><div class="a t" style="left:454px;top:112.05px;font-size:11px;color:#000;font-family:'Liberation Sans', sans-serif;">Ед.изм.</div><div class="a t" style="left:454px;top:125.05px;font-size:11px;color:#000;font-family:'Liberation Sans', sans-serif;">(краткая)</div><div class="a t" style="left:521px;top:111.05px;font-size:11px;color:#000;font-family:'Liberation Sans', sans-serif;">Количество</div><div class="a t" style="left:690px;top:111.05px;font-size:11px;color:#000;font-family:'Liberation Sans', sans-serif;">Уровень цен 2000</div><div class="a t" style="left:521px;top:128.04px;font-size:11px;color:#000;font-family:'Liberation Sans', sans-serif;">Всего с коэф.</div><div class="a t" style="left:602px;top:128.04px;font-size:11px;color:#000;font-family:'Liberation Sans', sans-serif;">Норма расхода</div><div class="a t" style="left:690px;top:128.04px;font-size:11px;color:#000;font-family:'Liberation Sans', sans-serif;">Всего</div><div class="a t" style="left:779px;top:128.04px;font-size:11px;color:#000;font-family:'Liberation Sans', sans-serif;">ПЗ</div><div class="a t" style="left:873px;top:128.04px;font-size:11px;color:#000;font-family:'Liberation Sans', sans-serif;">ОЗП</div><div class="a t" style="left:939px;top:128.04px;font-size:11px;color:#000;font-family:'Liberation Sans', sans-serif;">ЭММ</div><div class="a t" style="left:1005px;top:128.04px;font-size:11px;color:#000;font-family:'Liberation Sans', sans-serif;">ЗПМ</div><div class="a t" style="left:1070px;top:128.04px;font-size:11px;color:#000;font-family:'Liberation Sans', sans-serif;">СтМат</div><div class="a t" style="left:1136px;top:128.04px;font-size:11px;color:#000;font-family:'Liberation Sans', sans-serif;">Прочие</div><div class="a t" style="left:1202px;top:128.04px;font-size:11px;color:#000;font-family:'Liberation Sans', sans-serif;">НР</div><div class="a t" style="left:1268px;top:128.04px;font-size:11px;color:#000;font-family:'Liberation Sans', sans-serif;">СП</div><div class="a" style="left:5px;top:144px;width:11px;height:29px;background:#fff;"></div><div class="a" style="left:6px;top:145px;width:9px;height:27px;background:#f0f0f0;"></div><div class="a" style="left:16px;top:144px;width:1273px;height:29px;background:#ebebfb;"></div><div class="a" style="left:17px;top:144px;width:17px;height:29px;background:#fff;"></div><div class="a" style="left:18px;top:145px;width:15px;height:27px;background:#ebebfb;"></div><div class="a" style="left:35px;top:144px;width:17px;height:29px;background:#fff;"></div><div class="a" style="left:36px;top:145px;width:15px;height:27px;background:#ebebfb;"></div><div class="a" style="left:53px;top:144px;width:37px;height:29px;background:#fff;"></div><div class="a" style="left:54px;top:145px;width:35px;height:27px;background:#ebebfb;"></div><div class="a" style="left:91px;top:144px;width:53px;height:29px;background:#fff;"></div><div class="a" style="left:92px;top:145px;width:51px;height:27px;background:#ebebfb;"></div><div class="a" style="left:38px;top:153px;width:11px;height:11px;background:#fff;border:1px solid #8a8a8a;box-sizing:border-box;"></div><div class="a t" style="left:55px;top:146.04px;font-size:11px;color:#0000f0;font-family:'Liberation Sans', sans-serif;width:34px;overflow:hidden;">ЛС1</div><div class="a" style="left:5px;top:173px;width:140px;height:1px;background:#808080;"></div><div class="a" style="left:145px;top:173px;width:1144px;height:1px;background:#c0c0c0;"></div><div class="a" style="left:5px;top:174px;width:11px;height:29px;background:#fff;"></div><div class="a" style="left:6px;top:175px;width:9px;height:27px;background:#f0f0f0;"></div><div class="a" style="left:16px;top:174px;width:1273px;height:29px;background:#f0f0fc;"></div><div class="a" style="left:17px;top:174px;width:17px;height:29px;background:#fff;"></div><div class="a" style="left:18px;top:175px;width:15px;height:27px;background:#f0f0fc;"></div><div class="a" style="left:35px;top:174px;width:17px;height:29px;background:#fff;"></div><div class="a" style="left:36px;top:175px;width:15px;height:27px;background:#f0f0fc;"></div><div class="a" style="left:53px;top:174px;width:37px;height:29px;background:#fff;"></div><div class="a" style="left:54px;top:175px;width:35px;height:27px;background:#f0f0fc;"></div><div class="a" style="left:91px;top:174px;width:53px;height:29px;background:#fff;"></div><div class="a" style="left:92px;top:175px;width:51px;height:27px;background:#f0f0fc;"></div><div class="a" style="left:38px;top:183px;width:11px;height:11px;background:#fff;border:1px solid #8a8a8a;box-sizing:border-box;"></div><div class="a t" style="left:55px;top:176.04px;font-size:11px;color:#0000f0;font-family:'Liberation Sans', sans-serif;width:34px;overflow:hidden;">ЛС1.Р1</div><div class="a" style="left:5px;top:203px;width:140px;height:1px;background:#808080;"></div><div class="a" style="left:145px;top:203px;width:1144px;height:1px;background:#c0c0c0;"></div><div class="a" style="left:5px;top:204px;width:11px;height:29px;background:#fff;"></div><div class="a" style="left:6px;top:205px;width:9px;height:27px;background:#f0f0f0;"></div><div class="a" style="left:38px;top:213px;width:11px;height:11px;background:#fff;border:1px solid #8a8a8a;box-sizing:border-box;"></div><div class="a t" style="left:55px;top:206.04px;font-size:11px;color:#000;font-family:'Liberation Sans', sans-serif;">1</div><div class="a t" style="left:147px;top:206.04px;font-size:11px;color:#000;font-family:'Liberation Sans', sans-serif;">3.1-1-1</div><svg class="a" style="left:209px;top:219px" width="7" height="12" viewBox="0 0 7 12"><path d="M1.5 10 V3 A2 2 0 0 1 5.5 3 V10 A2 2 0 0 1 1.5 10Z" fill="#e0e0e0" stroke="#303030" stroke-width="1.3"/><path d="M3.5 4 V9" stroke="#303030" stroke-width="1"/></svg><div class="a t" style="left:223px;top:206.04px;font-size:11px;color:#000;font-family:'Liberation Sans', sans-serif;">Разработка грунта в отвал экскаваторами</div><div class="a t" style="left:223px;top:219.04px;font-size:11px;color:#000;font-family:'Liberation Sans', sans-serif;">с ковшом вместимостью 1,8 м3 группа</div><div class="a t" style="left:454px;top:206.04px;font-size:11px;color:#000;font-family:'Liberation Sans', sans-serif;">100 м3</div><div class="a t" style="left:454px;top:219.04px;font-size:11px;color:#000;font-family:'Liberation Sans', sans-serif;">грунта</div><div class="a t" style="left:521px;top:206.04px;font-size:11px;color:#000;font-family:'Liberation Sans', sans-serif;">0,07</div><div class="a t" style="left:683px;width:90px;text-align:right;top:206.04px;font-size:11px;color:#000;font-family:'Liberation Sans', sans-serif;">25,32</div><div class="a t" style="left:777px;width:90px;text-align:right;top:206.04px;font-size:11px;color:#000;font-family:'Liberation Sans', sans-serif;">25,32</div><div class="a t" style="left:843px;width:90px;text-align:right;top:206.04px;font-size:11px;color:#000;font-family:'Liberation Sans', sans-serif;">0,38</div><div class="a t" style="left:909px;width:90px;text-align:right;top:206.04px;font-size:11px;color:#000;font-family:'Liberation Sans', sans-serif;">24,94</div><div class="a t" style="left:974px;width:90px;text-align:right;top:206.04px;font-size:11px;color:#000;font-family:'Liberation Sans', sans-serif;">1,19</div><div class="a t" style="left:1040px;width:90px;text-align:right;top:206.04px;font-size:11px;color:#000;font-family:'Liberation Sans', sans-serif;">0</div><div class="a t" style="left:1106px;width:90px;text-align:right;top:206.04px;font-size:11px;color:#000;font-family:'Liberation Sans', sans-serif;">0</div><div class="a t" style="left:1172px;width:90px;text-align:right;top:206.04px;font-size:11px;color:#000;font-family:'Liberation Sans', sans-serif;">0</div><div class="a" style="left:5px;top:233px;width:140px;height:1px;background:#808080;"></div><div class="a" style="left:145px;top:233px;width:1144px;height:1px;background:#c0c0c0;"></div><div class="a" style="left:5px;top:234px;width:11px;height:29px;background:#fff;"></div><div class="a" style="left:6px;top:235px;width:9px;height:27px;background:#f0f0f0;"></div><div class="a" style="left:38px;top:243px;width:11px;height:11px;background:#fff;border:1px solid #8a8a8a;box-sizing:border-box;"></div><div class="a t" style="left:55px;top:236.04px;font-size:11px;color:#000;font-family:'Liberation Sans', sans-serif;">2</div><div class="a t" style="left:147px;top:236.04px;font-size:11px;color:#000;font-family:'Liberation Sans', sans-serif;">3.12-1-1</div><svg class="a" style="left:209px;top:249px" width="7" height="12" viewBox="0 0 7 12"><path d="M1.5 10 V3 A2 2 0 0 1 5.5 3 V10 A2 2 0 0 1 1.5 10Z" fill="#e0e0e0" stroke="#303030" stroke-width="1.3"/><path d="M3.5 4 V9" stroke="#303030" stroke-width="1"/></svg><div class="a t" style="left:223px;top:236.04px;font-size:11px;color:#000;font-family:'Liberation Sans', sans-serif;">Устройство кровель скатных из трех слоев</div><div class="a t" style="left:223px;top:249.04px;font-size:11px;color:#000;font-family:'Liberation Sans', sans-serif;">кровельных рулонных материалов на</div><div class="a t" style="left:454px;top:236.04px;font-size:11px;color:#000;font-family:'Liberation Sans', sans-serif;">100 м2</div><div class="a t" style="left:454px;top:249.04px;font-size:11px;color:#000;font-family:'Liberation Sans', sans-serif;">кровли,</div><div class="a t" style="left:521px;top:236.04px;font-size:11px;color:#000;font-family:'Liberation Sans', sans-serif;">0,07</div><div class="a t" style="left:683px;width:90px;text-align:right;top:236.04px;font-size:11px;color:#000;font-family:'Liberation Sans', sans-serif;">210,38</div><div class="a t" style="left:777px;width:90px;text-align:right;top:236.04px;font-size:11px;color:#000;font-family:'Liberation Sans', sans-serif;">210,38</div><div class="a t" style="left:843px;width:90px;text-align:right;top:236.04px;font-size:11px;color:#000;font-family:'Liberation Sans', sans-serif;">12,9</div><div class="a t" style="left:909px;width:90px;text-align:right;top:236.04px;font-size:11px;color:#000;font-family:'Liberation Sans', sans-serif;">1,82</div><div class="a t" style="left:974px;width:90px;text-align:right;top:236.04px;font-size:11px;color:#000;font-family:'Liberation Sans', sans-serif;">0,22</div><div class="a t" style="left:1040px;width:90px;text-align:right;top:236.04px;font-size:11px;color:#000;font-family:'Liberation Sans', sans-serif;">195,66</div><div class="a t" style="left:1106px;width:90px;text-align:right;top:236.04px;font-size:11px;color:#000;font-family:'Liberation Sans', sans-serif;">0</div><div class="a t" style="left:1172px;width:90px;text-align:right;top:236.04px;font-size:11px;color:#000;font-family:'Liberation Sans', sans-serif;">0</div><div class="a" style="left:5px;top:263px;width:140px;height:1px;background:#808080;"></div><div class="a" style="left:145px;top:263px;width:1144px;height:1px;background:#c0c0c0;"></div><div class="a" style="left:5px;top:264px;width:11px;height:29px;background:#fff;"></div><div class="a" style="left:6px;top:265px;width:9px;height:27px;background:#f0f0f0;"></div><div class="a" style="left:16px;top:264px;width:1273px;height:29px;background:#fde9e9;"></div><div class="a" style="left:17px;top:264px;width:17px;height:29px;background:#fff;"></div><div class="a" style="left:18px;top:265px;width:15px;height:27px;background:#fde9e9;"></div><div class="a" style="left:35px;top:264px;width:17px;height:29px;background:#fff;"></div><div class="a" style="left:36px;top:265px;width:15px;height:27px;background:#fde9e9;"></div><div class="a" style="left:53px;top:264px;width:37px;height:29px;background:#fff;"></div><div class="a" style="left:54px;top:265px;width:35px;height:27px;background:#fde9e9;"></div><div class="a" style="left:91px;top:264px;width:53px;height:29px;background:#fff;"></div><div class="a" style="left:92px;top:265px;width:51px;height:27px;background:#fde9e9;"></div><div class="a" style="left:38px;top:273px;width:11px;height:11px;background:#fff;border:1px solid #8a8a8a;box-sizing:border-box;"></div><div class="a t" style="left:55px;top:265.14px;font-size:12px;color:#1a80c8;font-family:'Liberation Sans', sans-serif;font-weight:700;">3</div><div class="a t" style="left:147px;top:264.69px;font-size:12.5px;color:#1a80c8;font-family:'Liberation Sans', sans-serif;font-weight:700;">13.1-1-6</div><svg class="a" style="left:209px;top:279px" width="7" height="12" viewBox="0 0 7 12"><path d="M1.5 10 V3 A2 2 0 0 1 5.5 3 V10 A2 2 0 0 1 1.5 10Z" fill="#e0e0e0" stroke="#303030" stroke-width="1.3"/><path d="M3.5 4 V9" stroke="#303030" stroke-width="1"/></svg><div class="a t" style="left:223px;top:266.05px;font-size:11px;color:#1a80c8;font-family:'Liberation Sans', sans-serif;">Пускатель магнитный ПМЛ-1220.</div><div class="a t" style="left:223px;top:279.05px;font-size:11px;color:#1a80c8;font-family:'Liberation Sans', sans-serif;">Номинальный ток 10 А, напряжение</div><div class="a t" style="left:454px;top:266.05px;font-size:11px;color:#1a80c8;font-family:'Liberation Sans', sans-serif;">шт.</div><div class="a t" style="left:521px;top:266.05px;font-size:11px;color:#1a80c8;font-family:'Liberation Sans', sans-serif;">0</div><div class="a t" style="left:683px;width:90px;text-align:right;top:266.05px;font-size:11px;color:#1a80c8;font-family:'Liberation Sans', sans-serif;">0</div><div class="a t" style="left:777px;width:90px;text-align:right;top:266.05px;font-size:11px;color:#1a80c8;font-family:'Liberation Sans', sans-serif;">0</div><div class="a t" style="left:843px;width:90px;text-align:right;top:266.05px;font-size:11px;color:#1a80c8;font-family:'Liberation Sans', sans-serif;">0</div><div class="a t" style="left:909px;width:90px;text-align:right;top:266.05px;font-size:11px;color:#1a80c8;font-family:'Liberation Sans', sans-serif;">0</div><div class="a t" style="left:974px;width:90px;text-align:right;top:266.05px;font-size:11px;color:#1a80c8;font-family:'Liberation Sans', sans-serif;">0</div><div class="a t" style="left:1040px;width:90px;text-align:right;top:266.05px;font-size:11px;color:#1a80c8;font-family:'Liberation Sans', sans-serif;">0</div><div class="a t" style="left:1106px;width:90px;text-align:right;top:266.05px;font-size:11px;color:#1a80c8;font-family:'Liberation Sans', sans-serif;">0</div><div class="a t" style="left:1172px;width:90px;text-align:right;top:266.05px;font-size:11px;color:#1a80c8;font-family:'Liberation Sans', sans-serif;">0</div><div class="a" style="left:5px;top:293px;width:140px;height:1px;background:#808080;"></div><div class="a" style="left:145px;top:293px;width:1144px;height:1px;background:#c0c0c0;"></div><div class="a" style="left:5px;top:294px;width:11px;height:29px;background:#fff;"></div><div class="a" style="left:6px;top:295px;width:9px;height:27px;background:#f0f0f0;"></div><div class="a" style="left:38px;top:303px;width:11px;height:11px;background:#fff;border:1px solid #8a8a8a;box-sizing:border-box;"></div><div class="a t" style="left:55px;top:296.05px;font-size:11px;color:#000;font-family:'Liberation Sans', sans-serif;">4</div><div class="a t" style="left:147px;top:296.05px;font-size:11px;color:#000;font-family:'Liberation Sans', sans-serif;">3.14-1-1</div><svg class="a" style="left:209px;top:309px" width="7" height="12" viewBox="0 0 7 12"><path d="M1.5 10 V3 A2 2 0 0 1 5.5 3 V10 A2 2 0 0 1 1.5 10Z" fill="#e0e0e0" stroke="#303030" stroke-width="1.3"/><path d="M3.5 4 V9" stroke="#303030" stroke-width="1"/></svg><div class="a t" style="left:223px;top:296.05px;font-size:11px;color:#000;font-family:'Liberation Sans', sans-serif;">Установка сборных железобетонных</div><div class="a t" style="left:223px;top:309.05px;font-size:11px;color:#000;font-family:'Liberation Sans', sans-serif;">фундаментных столбиков</div><div class="a t" style="left:454px;top:296.05px;font-size:11px;color:#000;font-family:'Liberation Sans', sans-serif;">1</div><div class="a t" style="left:454px;top:309.05px;font-size:11px;color:#000;font-family:'Liberation Sans', sans-serif;">конструкция</div><div class="a t" style="left:521px;top:296.05px;font-size:11px;color:#000;font-family:'Liberation Sans', sans-serif;">5</div><div class="a t" style="left:683px;width:90px;text-align:right;top:296.05px;font-size:11px;color:#000;font-family:'Liberation Sans', sans-serif;">72,7</div><div class="a t" style="left:777px;width:90px;text-align:right;top:296.05px;font-size:11px;color:#000;font-family:'Liberation Sans', sans-serif;">72,7</div><div class="a t" style="left:843px;width:90px;text-align:right;top:296.05px;font-size:11px;color:#000;font-family:'Liberation Sans', sans-serif;">68,55</div><div class="a t" style="left:909px;width:90px;text-align:right;top:296.05px;font-size:11px;color:#000;font-family:'Liberation Sans', sans-serif;">4,15</div><div class="a t" style="left:974px;width:90px;text-align:right;top:296.05px;font-size:11px;color:#000;font-family:'Liberation Sans', sans-serif;">0,65</div><div class="a t" style="left:1040px;width:90px;text-align:right;top:296.05px;font-size:11px;color:#000;font-family:'Liberation Sans', sans-serif;">0</div><div class="a t" style="left:1106px;width:90px;text-align:right;top:296.05px;font-size:11px;color:#000;font-family:'Liberation Sans', sans-serif;">0</div><div class="a t" style="left:1172px;width:90px;text-align:right;top:296.05px;font-size:11px;color:#000;font-family:'Liberation Sans', sans-serif;">0</div><div class="a" style="left:5px;top:323px;width:140px;height:1px;background:#808080;"></div><div class="a" style="left:145px;top:323px;width:1144px;height:1px;background:#c0c0c0;"></div><div class="a" style="left:5px;top:324px;width:11px;height:29px;background:#fff;"></div><div class="a" style="left:6px;top:325px;width:9px;height:27px;background:#f0f0f0;"></div><div class="a" style="left:38px;top:333px;width:11px;height:11px;background:#fff;border:1px solid #8a8a8a;box-sizing:border-box;"></div><div class="a t" style="left:55px;top:326.05px;font-size:11px;color:#000;font-family:'Liberation Sans', sans-serif;">5</div><div class="a t" style="left:147px;top:326.05px;font-size:11px;color:#000;font-family:'Liberation Sans', sans-serif;">3.15-1-1</div><svg class="a" style="left:209px;top:339px" width="7" height="12" viewBox="0 0 7 12"><path d="M1.5 10 V3 A2 2 0 0 1 5.5 3 V10 A2 2 0 0 1 1.5 10Z" fill="#e0e0e0" stroke="#303030" stroke-width="1.3"/><path d="M3.5 4 V9" stroke="#303030" stroke-width="1"/></svg><div class="a t" style="left:223px;top:326.05px;font-size:11px;color:#000;font-family:'Liberation Sans', sans-serif;">Облицовка стен гранитными плитами</div><div class="a t" style="left:223px;top:339.05px;font-size:11px;color:#000;font-family:'Liberation Sans', sans-serif;">полированными толщиной 40 мм при числе</div><div class="a t" style="left:454px;top:326.05px;font-size:11px;color:#000;font-family:'Liberation Sans', sans-serif;">100 м2</div><div class="a t" style="left:454px;top:339.05px;font-size:11px;color:#000;font-family:'Liberation Sans', sans-serif;">поверхности</div><div class="a t" style="left:521px;top:326.05px;font-size:11px;color:#000;font-family:'Liberation Sans', sans-serif;">0</div><div class="a t" style="left:683px;width:90px;text-align:right;top:326.05px;font-size:11px;color:#000;font-family:'Liberation Sans', sans-serif;">0</div><div class="a t" style="left:777px;width:90px;text-align:right;top:326.05px;font-size:11px;color:#000;font-family:'Liberation Sans', sans-serif;">0</div><div class="a t" style="left:843px;width:90px;text-align:right;top:326.05px;font-size:11px;color:#000;font-family:'Liberation Sans', sans-serif;">0</div><div class="a t" style="left:909px;width:90px;text-align:right;top:326.05px;font-size:11px;color:#000;font-family:'Liberation Sans', sans-serif;">0</div><div class="a t" style="left:974px;width:90px;text-align:right;top:326.05px;font-size:11px;color:#000;font-family:'Liberation Sans', sans-serif;">0</div><div class="a t" style="left:1040px;width:90px;text-align:right;top:326.05px;font-size:11px;color:#000;font-family:'Liberation Sans', sans-serif;">0</div><div class="a t" style="left:1106px;width:90px;text-align:right;top:326.05px;font-size:11px;color:#000;font-family:'Liberation Sans', sans-serif;">0</div><div class="a t" style="left:1172px;width:90px;text-align:right;top:326.05px;font-size:11px;color:#000;font-family:'Liberation Sans', sans-serif;">0</div><div class="a" style="left:5px;top:353px;width:140px;height:1px;background:#808080;"></div><div class="a" style="left:145px;top:353px;width:1144px;height:1px;background:#c0c0c0;"></div><div class="a" style="left:5px;top:354px;width:11px;height:29px;background:#fff;"></div><div class="a" style="left:6px;top:355px;width:9px;height:27px;background:#f0f0f0;"></div><div class="a" style="left:221px;top:354px;width:230px;height:29px;background:#a0a0a0;"></div><div class="a" style="left:38px;top:363px;width:11px;height:11px;background:#fff;border:1px solid #8a8a8a;box-sizing:border-box;"></div><div class="a t" style="left:55px;top:356.05px;font-size:11px;color:#000;font-family:'Liberation Sans', sans-serif;">6</div><div class="a t" style="left:147px;top:356.05px;font-size:11px;color:#000;font-family:'Liberation Sans', sans-serif;">5.4-2-4</div><svg class="a" style="left:209px;top:369px" width="7" height="12" viewBox="0 0 7 12"><path d="M1.5 10 V3 A2 2 0 0 1 5.5 3 V10 A2 2 0 0 1 1.5 10Z" fill="#e0e0e0" stroke="#303030" stroke-width="1.3"/><path d="M3.5 4 V9" stroke="#303030" stroke-width="1"/></svg><div class="a t" style="left:223px;top:356.05px;font-size:11px;color:#fff;font-family:'Liberation Sans', sans-serif;">Итого</div><div class="a t" style="left:454px;top:356.05px;font-size:11px;color:#000;font-family:'Liberation Sans', sans-serif;">1 комплект</div><div class="a t" style="left:521px;top:356.05px;font-size:11px;color:#000;font-family:'Liberation Sans', sans-serif;">4</div><div class="a t" style="left:683px;width:90px;text-align:right;top:356.05px;font-size:11px;color:#000;font-family:'Liberation Sans', sans-serif;">6 666,52</div><div class="a t" style="left:777px;width:90px;text-align:right;top:356.05px;font-size:11px;color:#000;font-family:'Liberation Sans', sans-serif;">6 666,52</div><div class="a t" style="left:843px;width:90px;text-align:right;top:356.05px;font-size:11px;color:#000;font-family:'Liberation Sans', sans-serif;">6 666,52</div><div class="a t" style="left:909px;width:90px;text-align:right;top:356.05px;font-size:11px;color:#000;font-family:'Liberation Sans', sans-serif;">0</div><div class="a t" style="left:974px;width:90px;text-align:right;top:356.05px;font-size:11px;color:#000;font-family:'Liberation Sans', sans-serif;">0</div><div class="a t" style="left:1040px;width:90px;text-align:right;top:356.05px;font-size:11px;color:#000;font-family:'Liberation Sans', sans-serif;">0</div><div class="a t" style="left:1106px;width:90px;text-align:right;top:356.05px;font-size:11px;color:#000;font-family:'Liberation Sans', sans-serif;">0</div><div class="a t" style="left:1172px;width:90px;text-align:right;top:356.05px;font-size:11px;color:#000;font-family:'Liberation Sans', sans-serif;">0</div><svg class="a" style="left:7px;top:360px" width="8" height="14" viewBox="0 0 8 14"><path d="M1 1 L7 7 L1 13Z" fill="#000"/></svg><div class="a" style="left:5px;top:383px;width:140px;height:1px;background:#808080;"></div><div class="a" style="left:145px;top:383px;width:1144px;height:1px;background:#c0c0c0;"></div><div class="a t" style="left:146px;top:144.14px;font-size:12px;color:#0000f0;font-family:'Liberation Sans', sans-serif;font-weight:700;">Новая</div><div class="a t" style="left:146px;top:157.14px;font-size:12px;color:#0000f0;font-family:'Liberation Sans', sans-serif;font-weight:700;">локальн</div><div class="a t" style="left:146px;top:174.14px;font-size:12px;color:#0000f0;font-family:'Liberation Sans', sans-serif;font-weight:700;">Новый</div><div class="a t" style="left:146px;top:186.14px;font-size:12px;color:#0000f0;font-family:'Liberation Sans', sans-serif;font-weight:700;">раздел</div><div class="a t" style="left:223px;top:146.24px;font-size:13px;color:#0000f0;font-family:'Liberation Sans', sans-serif;font-weight:700;letter-spacing:0.4px;">Новая локальная смета</div><div class="a t" style="left:239px;top:175.24px;font-size:13px;color:#0000f0;font-family:'Liberation Sans', sans-serif;font-weight:700;">Раздел:</div><svg class="a" style="left:196px;top:144px" width="24" height="23" viewBox="0 0 24 23"><path d="M8 14 L23 1 L16 21.5 Z" fill="#fff" stroke="#5080c0" stroke-width="0.8"/><path d="M0.5 13 L14 1.5 L23 0.5 L8 14 Z" fill="#3cc060" stroke="#30a050" stroke-width="0.6"/><path d="M0.5 13 V15 L15.5 22 L16 21.5 L8 14 Z" fill="#d0e4ec" stroke="#2a7a70" stroke-width="0.8"/><text x="9" y="15" font-size="6" font-weight="700" font-family="Liberation Sans" fill="#000" transform="rotate(25 12 14)">ЛС</text></svg><svg class="a" style="left:196px;top:175px" width="24" height="23" viewBox="0 0 24 23"><rect x="7.5" y="0.5" width="16" height="21" fill="#f8f0a0" stroke="#a0a0a0" stroke-width="0.8"/><path d="M17 4.5 H22 M17 6.5 H22 M17 8.5 H22 M17 10.5 H22 M17 12.5 H22 M17 14.5 H22 M17 16.5 H22" stroke="#b8a850" stroke-width="0.7"/><path d="M0.5 2.5 H9.5 L16 9 V22.5 H0.5Z" fill="#b8f0c0" stroke="#808080" stroke-width="0.9"/><path d="M9.5 2.5 V9 H16" fill="#e8fff0" stroke="#909090" stroke-width="0.7"/><rect x="6.5" y="11.5" width="9" height="11" fill="#fff" stroke="#808080" stroke-width="0.9"/><text x="8.6" y="20.5" font-size="8" font-weight="700" font-family="Liberation Sans" fill="#000">Р</text></svg><svg class="a" style="left:18px;top:271px" width="16" height="15" viewBox="0 0 16 15"><rect x="3.5" y="1.5" width="9" height="9.5" fill="#e8c898" stroke="#7a5030" stroke-width="1"/><path d="M5 4 H7 M10 3.5 V7 M8.5 8 H11.5" stroke="#a03020" stroke-width="0.9"/><rect x="0.5" y="6.5" width="5" height="6" fill="#f0dca8" stroke="#6a4020" stroke-width="1"/><path d="M2 7.5 V12 M4 7.5 V12" stroke="#a08860" stroke-width="0.6"/><rect x="9.5" y="9.5" width="5.5" height="4.5" fill="#f0c080" stroke="#6a4020" stroke-width="1"/></svg><div class="a" style="left:16px;top:143px;width:1px;height:240px;background:#808080;"></div><div class="a" style="left:34px;top:143px;width:1px;height:240px;background:#808080;"></div><div class="a" style="left:52px;top:143px;width:1px;height:240px;background:#808080;"></div><div class="a" style="left:90px;top:143px;width:1px;height:240px;background:#808080;"></div><div class="a" style="left:144px;top:143px;width:1px;height:240px;background:#808080;"></div><div class="a" style="left:220px;top:143px;width:1px;height:240px;background:#c0c0c0;"></div><div class="a" style="left:451px;top:143px;width:1px;height:240px;background:#c0c0c0;"></div><div class="a" style="left:518px;top:143px;width:1px;height:240px;background:#c0c0c0;"></div><div class="a" style="left:599px;top:143px;width:1px;height:240px;background:#c0c0c0;"></div><div class="a" style="left:687px;top:143px;width:1px;height:240px;background:#c0c0c0;"></div><div class="a" style="left:776px;top:143px;width:1px;height:240px;background:#c0c0c0;"></div><div class="a" style="left:870px;top:143px;width:1px;height:240px;background:#c0c0c0;"></div><div class="a" style="left:936px;top:143px;width:1px;height:240px;background:#c0c0c0;"></div><div class="a" style="left:1002px;top:143px;width:1px;height:240px;background:#c0c0c0;"></div><div class="a" style="left:1067px;top:143px;width:1px;height:240px;background:#c0c0c0;"></div><div class="a" style="left:1133px;top:143px;width:1px;height:240px;background:#c0c0c0;"></div><div class="a" style="left:1199px;top:143px;width:1px;height:240px;background:#c0c0c0;"></div><div class="a" style="left:1265px;top:143px;width:1px;height:240px;background:#c0c0c0;"></div><div class="a" style="left:4px;top:107px;width:1px;height:535px;background:#a0a0a0;"></div><div class="a" style="left:1289px;top:108px;width:17px;height:517px;background:#f0f0f0;"></div><svg class="a" style="left:1291px;top:111px" width="13" height="10" viewBox="0 0 13 10"><path d="M2.5 7 L6.5 3 L10.5 7" stroke="#606060" stroke-width="2" fill="none"/></svg><div class="a" style="left:1290px;top:351px;width:15px;height:256px;background:#cdcdcd;"></div><svg class="a" style="left:1291px;top:611px" width="13" height="10" viewBox="0 0 13 10"><path d="M2.5 3 L6.5 7 L10.5 3" stroke="#606060" stroke-width="2" fill="none"/></svg><div class="a" style="left:5px;top:625px;width:1301px;height:16px;background:#f0f0f0;"></div><svg class="a" style="left:8px;top:627px" width="10" height="13" viewBox="0 0 10 13"><path d="M7 2.5 L3 6.5 L7 10.5" stroke="#606060" stroke-width="2" fill="none"/></svg><div class="a" style="left:22px;top:625px;width:17px;height:15px;background:#cdcdcd;"></div><svg class="a" style="left:1275px;top:627px" width="10" height="13" viewBox="0 0 10 13"><path d="M3 2.5 L7 6.5 L3 10.5" stroke="#606060" stroke-width="2" fill="none"/></svg><div class="a" style="left:2px;top:664px;width:1309px;height:1px;background:#a0a0a0;"></div><div class="a" style="left:2px;top:665px;width:1309px;height:1px;background:#fff;"></div><div class="a" style="left:3px;top:643px;width:72px;height:19px;background:#f0f0f0;"></div><div class="a" style="left:2px;top:662px;width:74px;height:2px;background:#808080;"></div><div class="a" style="left:76px;top:644px;width:106px;height:17px;background:#f0f0f0;border-left:1px solid #fff;border-top:1px solid #fff;border-right:2px solid #808080;border-bottom:2px solid #808080;box-sizing:border-box;"></div><div class="a" style="left:183px;top:644px;width:68px;height:17px;background:#f0f0f0;border-left:1px solid #fff;border-top:1px solid #fff;border-right:2px solid #808080;border-bottom:2px solid #808080;box-sizing:border-box;"></div><div class="a" style="left:252px;top:644px;width:102px;height:17px;background:#f0f0f0;border-left:1px solid #fff;border-top:1px solid #fff;border-right:2px solid #808080;border-bottom:2px solid #808080;box-sizing:border-box;"></div><div class="a" style="left:355px;top:644px;width:85px;height:17px;background:#f0f0f0;border-left:1px solid #fff;border-top:1px solid #fff;border-right:2px solid #808080;border-bottom:2px solid #808080;box-sizing:border-box;"></div><div class="a t" style="left:9px;top:648.04px;font-size:11px;color:#000;font-family:'Liberation Sans', sans-serif;">Полный вид</div><div class="a t" style="left:81px;top:646.04px;font-size:11px;color:#000;font-family:'Liberation Sans', sans-serif;">Сокращенный вид</div><div class="a t" style="left:188px;top:646.04px;font-size:11px;color:#000;font-family:'Liberation Sans', sans-serif;">Вид строки</div><div class="a t" style="left:257px;top:646.04px;font-size:11px;color:#000;font-family:'Liberation Sans', sans-serif;">Объектная смета</div><div class="a t" style="left:360px;top:646.04px;font-size:11px;color:#000;font-family:'Liberation Sans', sans-serif;">Предпросмотр</div><div class="a" style="left:1316px;top:109px;width:422px;height:1px;background:#a0a0a0;"></div><div class="a" style="left:1316px;top:110px;width:422px;height:1px;background:#fff;"></div><div class="a" style="left:1316px;top:112px;width:422px;height:1px;background:#a0a0a0;"></div><div class="a" style="left:1316px;top:113px;width:422px;height:1px;background:#fff;"></div><div class="a" style="left:1740px;top:105px;width:10px;height:10px;background:#f0f0f0;border-top:1px solid #fff;border-left:1px solid #fff;border-right:1px solid #808080;border-bottom:1px solid #808080;box-sizing:border-box;"></div><svg class="a" style="left:1740px;top:105px" width="10" height="10" viewBox="0 0 10 10"><path d="M2 2 L7 7 M7 2 L2 7" stroke="#000" stroke-width="0.9"/></svg><div class="a" style="left:1316px;top:117px;width:433px;height:1px;background:#fff;"></div><div class="a" style="left:1316px;top:117px;width:1px;height:447px;background:#fff;"></div><div class="a" style="left:1749px;top:116px;width:2px;height:448px;background:#7a7a7a;"></div><div class="a" style="left:1383px;top:125px;width:120px;height:18px;background:#c0dcc0;"></div><div class="a" style="left:1383px;top:125px;width:1px;height:18px;background:#fff;"></div><div class="a" style="left:1502px;top:125px;width:1px;height:18px;background:#a0a0a0;"></div><div class="a" style="left:1383px;top:142px;width:120px;height:1px;background:#a0a0a0;"></div><div class="a t" style="left:1388px;top:128.04px;font-size:11px;color:#000;font-family:'Liberation Sans', sans-serif;">Итоговые</div><div class="a" style="left:1503px;top:125px;width:120px;height:18px;background:#f0c8a0;"></div><div class="a" style="left:1503px;top:125px;width:1px;height:18px;background:#fff;"></div><div class="a" style="left:1622px;top:125px;width:1px;height:18px;background:#a0a0a0;"></div><div class="a" style="left:1503px;top:142px;width:120px;height:1px;background:#a0a0a0;"></div><div class="a t" style="left:1508px;top:128.04px;font-size:11px;color:#000;font-family:'Liberation Sans', sans-serif;">Единичные</div><div class="a" style="left:1623px;top:125px;width:120px;height:18px;background:#00ffff;"></div><div class="a" style="left:1623px;top:125px;width:1px;height:18px;background:#fff;"></div><div class="a" style="left:1742px;top:125px;width:1px;height:18px;background:#a0a0a0;"></div><div class="a" style="left:1623px;top:142px;width:120px;height:1px;background:#a0a0a0;"></div><div class="a t" style="left:1628px;top:128.04px;font-size:11px;color:#000;font-family:'Liberation Sans', sans-serif;">Базовые</div><div class="a t" style="left:1300px;width:80px;text-align:right;top:146.54px;font-size:11px;color:#000;font-family:'Liberation Sans', sans-serif;">Всего</div><div class="a" style="left:1385px;top:145px;width:116px;height:15px;background:#ebebeb;"></div><div class="a t" style="left:1389px;width:110px;text-align:right;top:146.54px;font-size:11px;color:#000;font-family:'Liberation Sans', sans-serif;">6 666,52</div><div class="a" style="left:1505px;top:145px;width:116px;height:15px;background:#ebebeb;"></div><div class="a" style="left:1625px;top:145px;width:103px;height:15px;background:#ebebeb;"></div><div class="a t" style="left:1300px;width:80px;text-align:right;top:165.54px;font-size:11px;color:#000;font-family:'Liberation Sans', sans-serif;">ПЗ</div><div class="a" style="left:1385px;top:164px;width:116px;height:15px;background:#ebebeb;"></div><div class="a t" style="left:1389px;width:110px;text-align:right;top:165.54px;font-size:11px;color:#000;font-family:'Liberation Sans', sans-serif;">6 666,52</div><div class="a" style="left:1505px;top:164px;width:116px;height:15px;background:#fff;"></div><div class="a" style="left:1625px;top:164px;width:103px;height:15px;background:#fff;"></div><div class="a t" style="left:1509px;width:110px;text-align:right;top:165.54px;font-size:11px;color:#000;font-family:'Liberation Sans', sans-serif;">1 666,63</div><div class="a t" style="left:1626px;width:100px;text-align:right;top:165.54px;font-size:11px;color:#000;font-family:'Liberation Sans', sans-serif;">1 666,63</div><div class="a t" style="left:1300px;width:80px;text-align:right;top:184.54px;font-size:11px;color:#000;font-family:'Liberation Sans', sans-serif;">ОЗП</div><div class="a" style="left:1385px;top:183px;width:116px;height:15px;background:#ebebeb;"></div><div class="a t" style="left:1389px;width:110px;text-align:right;top:184.54px;font-size:11px;color:#000;font-family:'Liberation Sans', sans-serif;">6 666,52</div><div class="a" style="left:1505px;top:183px;width:116px;height:15px;background:#fff;"></div><div class="a" style="left:1625px;top:183px;width:103px;height:15px;background:#fff;"></div><div class="a t" style="left:1509px;width:110px;text-align:right;top:184.54px;font-size:11px;color:#000;font-family:'Liberation Sans', sans-serif;">1 666,63</div><div class="a t" style="left:1626px;width:100px;text-align:right;top:184.54px;font-size:11px;color:#000;font-family:'Liberation Sans', sans-serif;">1 666,63</div><div class="a t" style="left:1300px;width:80px;text-align:right;top:203.54px;font-size:11px;color:#000;font-family:'Liberation Sans', sans-serif;">ЭММ</div><div class="a" style="left:1385px;top:202px;width:116px;height:15px;background:#ebebeb;"></div><div class="a t" style="left:1389px;width:110px;text-align:right;top:203.54px;font-size:11px;color:#000;font-family:'Liberation Sans', sans-serif;">0,00</div><div class="a" style="left:1505px;top:202px;width:116px;height:15px;background:#fff;"></div><div class="a" style="left:1625px;top:202px;width:103px;height:15px;background:#fff;"></div><div class="a t" style="left:1509px;width:110px;text-align:right;top:203.54px;font-size:11px;color:#000;font-family:'Liberation Sans', sans-serif;">0</div><div class="a t" style="left:1626px;width:100px;text-align:right;top:203.54px;font-size:11px;color:#000;font-family:'Liberation Sans', sans-serif;">0</div><div class="a t" style="left:1300px;width:80px;text-align:right;top:222.54px;font-size:11px;color:#000;font-family:'Liberation Sans', sans-serif;">ЗПМ</div><div class="a" style="left:1385px;top:221px;width:116px;height:15px;background:#ebebeb;"></div><div class="a t" style="left:1389px;width:110px;text-align:right;top:222.54px;font-size:11px;color:#000;font-family:'Liberation Sans', sans-serif;">0,00</div><div class="a" style="left:1505px;top:221px;width:116px;height:15px;background:#fff;"></div><div class="a" style="left:1625px;top:221px;width:103px;height:15px;background:#fff;"></div><div class="a t" style="left:1509px;width:110px;text-align:right;top:222.54px;font-size:11px;color:#000;font-family:'Liberation Sans', sans-serif;">0</div><div class="a t" style="left:1626px;width:100px;text-align:right;top:222.54px;font-size:11px;color:#000;font-family:'Liberation Sans', sans-serif;">0</div><div class="a t" style="left:1300px;width:80px;text-align:right;top:241.54px;font-size:11px;color:#000;font-family:'Liberation Sans', sans-serif;">СтМат</div><div class="a" style="left:1385px;top:240px;width:116px;height:15px;background:#ebebeb;"></div><div class="a t" style="left:1389px;width:110px;text-align:right;top:241.54px;font-size:11px;color:#000;font-family:'Liberation Sans', sans-serif;">0,00</div><div class="a" style="left:1505px;top:240px;width:116px;height:15px;background:#fff;"></div><div class="a" style="left:1625px;top:240px;width:103px;height:15px;background:#fff;"></div><div class="a t" style="left:1509px;width:110px;text-align:right;top:241.54px;font-size:11px;color:#000;font-family:'Liberation Sans', sans-serif;">0</div><div class="a t" style="left:1626px;width:100px;text-align:right;top:241.54px;font-size:11px;color:#000;font-family:'Liberation Sans', sans-serif;">0</div><div class="a t" style="left:1300px;width:80px;text-align:right;top:260.55px;font-size:11px;color:#000;font-family:'Liberation Sans', sans-serif;">Прочие</div><div class="a" style="left:1385px;top:259px;width:116px;height:15px;background:#ebebeb;"></div><div class="a t" style="left:1389px;width:110px;text-align:right;top:260.55px;font-size:11px;color:#000;font-family:'Liberation Sans', sans-serif;">0,00</div><div class="a" style="left:1505px;top:259px;width:116px;height:15px;background:#fff;"></div><div class="a" style="left:1625px;top:259px;width:103px;height:15px;background:#fff;"></div><div class="a t" style="left:1509px;width:110px;text-align:right;top:260.55px;font-size:11px;color:#000;font-family:'Liberation Sans', sans-serif;">0</div><div class="a t" style="left:1626px;width:100px;text-align:right;top:260.55px;font-size:11px;color:#000;font-family:'Liberation Sans', sans-serif;">0</div><div class="a t" style="left:1300px;width:80px;text-align:right;top:279.55px;font-size:11px;color:#000;font-family:'Liberation Sans', sans-serif;">ВозврМат</div><div class="a" style="left:1385px;top:278px;width:116px;height:15px;background:#ebebeb;"></div><div class="a t" style="left:1389px;width:110px;text-align:right;top:279.55px;font-size:11px;color:#000;font-family:'Liberation Sans', sans-serif;">0,00</div><div class="a" style="left:1505px;top:278px;width:116px;height:15px;background:#fff;"></div><div class="a" style="left:1625px;top:278px;width:103px;height:15px;background:#fff;"></div><div class="a t" style="left:1509px;width:110px;text-align:right;top:279.55px;font-size:11px;color:#000;font-family:'Liberation Sans', sans-serif;">0</div><div class="a t" style="left:1626px;width:100px;text-align:right;top:279.55px;font-size:11px;color:#000;font-family:'Liberation Sans', sans-serif;">0</div><div class="a t" style="left:1300px;width:80px;text-align:right;top:298.55px;font-size:11px;color:#000;font-family:'Liberation Sans', sans-serif;">ТрудСтр</div><div class="a" style="left:1385px;top:297px;width:116px;height:15px;background:#ebebeb;"></div><div class="a t" style="left:1389px;width:110px;text-align:right;top:298.55px;font-size:11px;color:#000;font-family:'Liberation Sans', sans-serif;">428</div><div class="a" style="left:1505px;top:297px;width:116px;height:15px;background:#fff;"></div><div class="a" style="left:1625px;top:297px;width:103px;height:15px;background:#fff;"></div><div class="a t" style="left:1509px;width:110px;text-align:right;top:298.55px;font-size:11px;color:#000;font-family:'Liberation Sans', sans-serif;">107</div><div class="a t" style="left:1626px;width:100px;text-align:right;top:298.55px;font-size:11px;color:#000;font-family:'Liberation Sans', sans-serif;">107</div><div class="a t" style="left:1300px;width:80px;text-align:right;top:317.55px;font-size:11px;color:#000;font-family:'Liberation Sans', sans-serif;">ТрудМаш</div><div class="a" style="left:1385px;top:316px;width:116px;height:15px;background:#ebebeb;"></div><div class="a t" style="left:1389px;width:110px;text-align:right;top:317.55px;font-size:11px;color:#000;font-family:'Liberation Sans', sans-serif;">0</div><div class="a" style="left:1505px;top:316px;width:116px;height:15px;background:#fff;"></div><div class="a" style="left:1625px;top:316px;width:103px;height:15px;background:#fff;"></div><div class="a t" style="left:1509px;width:110px;text-align:right;top:317.55px;font-size:11px;color:#000;font-family:'Liberation Sans', sans-serif;">0</div><div class="a t" style="left:1626px;width:100px;text-align:right;top:317.55px;font-size:11px;color:#000;font-family:'Liberation Sans', sans-serif;">0</div><div class="a t" style="left:1300px;width:80px;text-align:right;top:336.55px;font-size:11px;color:#000;font-family:'Liberation Sans', sans-serif;">ТранспМат</div><div class="a" style="left:1385px;top:335px;width:116px;height:15px;background:#ebebeb;"></div><div class="a t" style="left:1389px;width:110px;text-align:right;top:336.55px;font-size:11px;color:#000;font-family:'Liberation Sans', sans-serif;">0,00</div><div class="a" style="left:1505px;top:335px;width:116px;height:15px;background:#fff;"></div><div class="a" style="left:1625px;top:335px;width:103px;height:15px;background:#fff;"></div><div class="a t" style="left:1509px;width:110px;text-align:right;top:336.55px;font-size:11px;color:#000;font-family:'Liberation Sans', sans-serif;">0</div><div class="a t" style="left:1626px;width:100px;text-align:right;top:336.55px;font-size:11px;color:#000;font-family:'Liberation Sans', sans-serif;">0</div><div class="a t" style="left:1300px;width:80px;text-align:right;top:355.55px;font-size:11px;color:#000;font-family:'Liberation Sans', sans-serif;">%НР</div><div class="a" style="left:1385px;top:354px;width:116px;height:15px;background:#ebebeb;"></div><div class="a t" style="left:1389px;width:110px;text-align:right;top:355.55px;font-size:11px;color:#000;font-family:'Liberation Sans', sans-serif;">0</div><div class="a" style="left:1505px;top:354px;width:116px;height:15px;background:#fff;"></div><div class="a" style="left:1625px;top:354px;width:103px;height:15px;background:#fff;"></div><div class="a t" style="left:1509px;width:110px;text-align:right;top:355.55px;font-size:11px;color:#000;font-family:'Liberation Sans', sans-serif;">75</div><div class="a t" style="left:1626px;width:100px;text-align:right;top:355.55px;font-size:11px;color:#000;font-family:'Liberation Sans', sans-serif;">75</div><div class="a t" style="left:1300px;width:80px;text-align:right;top:374.55px;font-size:11px;color:#000;font-family:'Liberation Sans', sans-serif;">%СП</div><div class="a" style="left:1385px;top:373px;width:116px;height:15px;background:#ebebeb;"></div><div class="a t" style="left:1389px;width:110px;text-align:right;top:374.55px;font-size:11px;color:#000;font-family:'Liberation Sans', sans-serif;">0</div><div class="a" style="left:1505px;top:373px;width:116px;height:15px;background:#fff;"></div><div class="a" style="left:1625px;top:373px;width:103px;height:15px;background:#fff;"></div><div class="a t" style="left:1509px;width:110px;text-align:right;top:374.55px;font-size:11px;color:#000;font-family:'Liberation Sans', sans-serif;">70</div><div class="a t" style="left:1626px;width:100px;text-align:right;top:374.55px;font-size:11px;color:#000;font-family:'Liberation Sans', sans-serif;">70</div><div class="a t" style="left:1300px;width:80px;text-align:right;top:393.55px;font-size:11px;color:#000;font-family:'Liberation Sans', sans-serif;">НР</div><div class="a" style="left:1385px;top:392px;width:116px;height:15px;background:#ebebeb;"></div><div class="a t" style="left:1389px;width:110px;text-align:right;top:393.55px;font-size:11px;color:#000;font-family:'Liberation Sans', sans-serif;">0,00</div><div class="a" style="left:1505px;top:392px;width:116px;height:15px;background:#ebebeb;"></div><div class="a" style="left:1625px;top:392px;width:103px;height:15px;background:#ebebeb;"></div><div class="a t" style="left:1300px;width:80px;text-align:right;top:412.55px;font-size:11px;color:#000;font-family:'Liberation Sans', sans-serif;">СП</div><div class="a" style="left:1385px;top:411px;width:116px;height:15px;background:#ebebeb;"></div><div class="a t" style="left:1389px;width:110px;text-align:right;top:412.55px;font-size:11px;color:#000;font-family:'Liberation Sans', sans-serif;">0,00</div><div class="a" style="left:1505px;top:411px;width:116px;height:15px;background:#ebebeb;"></div><div class="a" style="left:1625px;top:411px;width:103px;height:15px;background:#ebebeb;"></div><div class="a t" style="left:1539px;width:80px;text-align:right;top:431.55px;font-size:11px;color:#000;font-family:'Liberation Sans', sans-serif;">ЗУ раб.</div><div class="a" style="left:1625px;top:430px;width:103px;height:15px;background:#fff;"></div><div class="a t" style="left:1676px;width:50px;text-align:right;top:431.55px;font-size:11px;color:#000;font-family:'Liberation Sans', sans-serif;">1</div><div class="a t" style="left:1539px;width:80px;text-align:right;top:450.55px;font-size:11px;color:#000;font-family:'Liberation Sans', sans-serif;">ЗУ мат.</div><div class="a" style="left:1625px;top:449px;width:103px;height:15px;background:#fff;"></div><div class="a t" style="left:1676px;width:50px;text-align:right;top:450.55px;font-size:11px;color:#000;font-family:'Liberation Sans', sans-serif;">1</div><div class="a" style="left:1316px;top:564px;width:434px;height:1px;background:#a0a0a0;"></div><div class="a" style="left:1316px;top:565px;width:434px;height:1px;background:#fff;"></div><div class="a" style="left:1316px;top:565px;width:105px;height:19px;background:#f0f0f0;"></div><div class="a" style="left:1316px;top:565px;width:1px;height:20px;background:#fff;"></div><div class="a" style="left:1316px;top:584px;width:106px;height:1px;background:#808080;"></div><div class="a" style="left:1421px;top:584px;width:329px;height:1px;background:#c8c8c8;"></div><div class="a" style="left:1316px;top:585px;width:434px;height:1px;background:#fff;"></div><div class="a" style="left:1422px;top:564px;width:103px;height:19px;background:#f0f0f0;border-top:1px solid #fff;border-left:1px solid #fff;border-right:2px solid #808080;border-bottom:2px solid #808080;box-sizing:border-box;"></div><div class="a t" style="left:1323px;top:570.04px;font-size:11px;color:#000;font-family:'Liberation Sans', sans-serif;">Уровень цен 2000</div><div class="a t" style="left:1427px;top:568.04px;font-size:11px;color:#000;font-family:'Liberation Sans', sans-serif;">Уровень цен 2025</div><div class="a t" style="left:1323px;top:596.04px;font-size:11px;color:#000;font-family:'Liberation Sans', sans-serif;">№ формулы</div><div class="a" style="left:1392px;top:594px;width:132px;height:15px;background:#fff;"></div><div class="a t" style="left:1394px;top:596.04px;font-size:11px;color:#000;font-family:'Liberation Sans', sans-serif;">384</div><div class="a t" style="left:1323px;top:619.04px;font-size:11px;color:#000;font-family:'Liberation Sans', sans-serif;">Вид работы</div><div class="a" style="left:1392px;top:617px;width:132px;height:15px;background:#fff;"></div><div class="a t" style="left:1394px;top:619.04px;font-size:11px;color:#000;font-family:'Liberation Sans', sans-serif;">50</div><div class="a t" style="left:1532px;top:619.04px;font-size:11px;color:#000;font-family:'Liberation Sans', sans-serif;">(Пусконаладочные работы)</div><div class="a t" style="left:1323px;top:642.04px;font-size:11px;color:#000;font-family:'Liberation Sans', sans-serif;">Тип работы</div><div class="a" style="left:1392px;top:640px;width:223px;height:15px;background:#fff;"></div><div class="a t" style="left:1394px;top:642.04px;font-size:11px;color:#000;font-family:'Liberation Sans', sans-serif;">ПРОЧИЕ</div><div class="a" style="left:1601px;top:641px;width:13px;height:13px;background:#f4f4f4;"></div><svg class="a" style="left:1601px;top:641px" width="13" height="13" viewBox="0 0 13 13"><path d="M2.5 4.5 H10.5 L6.5 8.5Z" fill="#000"/></svg><div class="a" style="left:1311px;top:664px;width:441px;height:1px;background:#a0a0a0;"></div><div class="a" style="left:1311px;top:665px;width:441px;height:1px;background:#fff;"></div><div class="a" style="left:1313px;top:104px;width:1px;height:560px;background:#fff;"></div><div class="a" style="left:3px;top:670px;width:10px;height:9px;background:#f0f0f0;border-top:1px solid #fff;border-left:1px solid #fff;border-right:1px solid #808080;border-bottom:1px solid #808080;box-sizing:border-box;"></div><svg class="a" style="left:3px;top:670px" width="10" height="9" viewBox="0 0 10 9"><path d="M2.5 2 L7.5 7 M7.5 2 L2.5 7" stroke="#000" stroke-width="1"/></svg><div class="a" style="left:6px;top:681px;width:1px;height:407px;background:#a0a0a0;"></div><div class="a" style="left:7px;top:681px;width:1px;height:407px;background:#fff;"></div><div class="a" style="left:9px;top:681px;width:1px;height:407px;background:#a0a0a0;"></div><div class="a" style="left:10px;top:681px;width:1px;height:407px;background:#fff;"></div><div class="a" style="left:14px;top:689px;width:1736px;height:1px;background:#fff;"></div><div class="a" style="left:16px;top:671px;width:103px;height:18px;background:#f0f0f0;border-top:1px solid #fff;border-left:1px solid #fff;box-sizing:border-box;"></div><div class="a" style="left:120px;top:669px;width:148px;height:21px;background:#f0f0f0;border-top:1px solid #fff;border-left:1px solid #fff;border-right:2px solid #808080;box-sizing:border-box;"></div><div class="a t" style="left:21px;top:674.04px;font-size:11px;color:#000;font-family:'Liberation Sans', sans-serif;">Сметные индексы</div><div class="a t" style="left:127px;top:672.04px;font-size:11px;color:#000;font-family:'Liberation Sans', sans-serif;">Лимитированные затраты</div><div class="a" style="left:14px;top:689px;width:1px;height:401px;background:#fff;"></div><div class="a" style="left:17px;top:695px;width:26px;height:57px;background:#f0f0f0;border-right:1px solid #a0a0a0;border-bottom:1px solid #a0a0a0;box-sizing:border-box;"></div><div class="a" style="left:20px;top:696px;width:21px;height:1px;background:#a0a0a0;"></div><div class="a" style="left:20px;top:697px;width:21px;height:1px;background:#fff;"></div><svg class="a" style="left:22px;top:703px" width="14" height="14" viewBox="0 0 14 14"><path d="M7 1.5 V12.5 M1.5 7 H12.5" stroke="#3a9020" stroke-width="3"/></svg><div class="a" style="left:20px;top:724px;width:21px;height:1px;background:#a0a0a0;"></div><div class="a" style="left:20px;top:725px;width:21px;height:1px;background:#fff;"></div><svg class="a" style="left:23px;top:731px" width="13" height="13" viewBox="0 0 13 13"><path d="M2 2 L11 11 M11 2 L2 11" stroke="#e85030" stroke-width="1.8"/></svg><div class="a" style="left:18px;top:762px;width:23px;height:21px;background:#f8f8f8;border-top:1px solid #a0a0a0;border-left:1px solid #a0a0a0;box-sizing:border-box;"></div><div class="a t" style="left:25px;top:767.04px;font-size:11px;color:#000;font-family:'Liberation Sans', sans-serif;">Ст</div><div class="a t" style="left:23px;top:796.04px;font-size:11px;color:#000;font-family:'Liberation Sans', sans-serif;">ТР</div><div class="a t" style="left:23px;top:824.04px;font-size:11px;color:#000;font-family:'Liberation Sans', sans-serif;">ВР</div><div class="a" style="left:44px;top:692px;width:1686px;height:394px;background:#fff;"></div><div class="a" style="left:44px;top:692px;width:1px;height:394px;background:#a0a0a0;"></div><div class="a" style="left:44px;top:692px;width:1702px;height:1px;background:#a0a0a0;"></div><div class="a" style="left:45px;top:693px;width:885px;height:61px;background:#f0f0f0;"></div><div class="a" style="left:56px;top:693px;width:1px;height:61px;background:#808080;"></div><div class="a" style="left:57px;top:693px;width:1px;height:61px;background:#fff;"></div><div class="a" style="left:92px;top:693px;width:1px;height:61px;background:#808080;"></div><div class="a" style="left:93px;top:693px;width:1px;height:61px;background:#fff;"></div><div class="a" style="left:163px;top:693px;width:1px;height:61px;background:#808080;"></div><div class="a" style="left:164px;top:693px;width:1px;height:61px;background:#fff;"></div><div class="a" style="left:434px;top:693px;width:1px;height:61px;background:#808080;"></div><div class="a" style="left:435px;top:693px;width:1px;height:61px;background:#fff;"></div><div class="a" style="left:515px;top:693px;width:1px;height:61px;background:#808080;"></div><div class="a" style="left:516px;top:693px;width:1px;height:61px;background:#fff;"></div><div class="a" style="left:596px;top:693px;width:1px;height:61px;background:#808080;"></div><div class="a" style="left:597px;top:693px;width:1px;height:61px;background:#fff;"></div><div class="a" style="left:657px;top:693px;width:1px;height:61px;background:#808080;"></div><div class="a" style="left:658px;top:693px;width:1px;height:61px;background:#fff;"></div><div class="a" style="left:753px;top:693px;width:1px;height:61px;background:#808080;"></div><div class="a" style="left:754px;top:693px;width:1px;height:61px;background:#fff;"></div><div class="a" style="left:829px;top:693px;width:1px;height:61px;background:#808080;"></div><div class="a" style="left:830px;top:693px;width:1px;height:61px;background:#fff;"></div><div class="a" style="left:930px;top:693px;width:1px;height:61px;background:#808080;"></div><div class="a" style="left:931px;top:693px;width:1px;height:61px;background:#fff;"></div><div class="a" style="left:434px;top:723px;width:162px;height:1px;background:#808080;"></div><div class="a" style="left:434px;top:724px;width:162px;height:1px;background:#fff;"></div><div class="a" style="left:45px;top:754px;width:885px;height:1px;background:#808080;"></div><div class="a" style="left:45px;top:693px;width:885px;height:1px;background:#fff;"></div><div class="a t" style="left:59px;top:717.04px;font-size:11px;color:#000;font-family:'Liberation Sans', sans-serif;">№п/п</div><div class="a t" style="left:95px;top:717.04px;font-size:11px;color:#000;font-family:'Liberation Sans', sans-serif;">Переменная</div><div class="a t" style="left:166px;top:717.04px;font-size:11px;color:#000;font-family:'Liberation Sans', sans-serif;">Наименование</div><div class="a t" style="left:437px;top:696.04px;font-size:11px;color:#000;font-family:'Liberation Sans', sans-serif;">Стандартные</div><div class="a t" style="left:437px;top:708.04px;font-size:11px;color:#000;font-family:'Liberation Sans', sans-serif;">итоги</div><div class="a t" style="left:437px;top:727.04px;font-size:11px;color:#000;font-family:'Liberation Sans', sans-serif;">Уровень цен</div><div class="a t" style="left:437px;top:739.54px;font-size:11px;color:#000;font-family:'Liberation Sans', sans-serif;">2000</div><div class="a t" style="left:518px;top:696.04px;font-size:11px;color:#000;font-family:'Liberation Sans', sans-serif;">Стандартные</div><div class="a t" style="left:518px;top:708.04px;font-size:11px;color:#000;font-family:'Liberation Sans', sans-serif;">итоги</div><div class="a t" style="left:518px;top:727.04px;font-size:11px;color:#000;font-family:'Liberation Sans', sans-serif;">Уровень цен</div><div class="a t" style="left:518px;top:739.54px;font-size:11px;color:#000;font-family:'Liberation Sans', sans-serif;">2025</div><div class="a t" style="left:599px;top:718.04px;font-size:11px;color:#000;font-family:'Liberation Sans', sans-serif;">Тип</div><div class="a t" style="left:660px;top:718.04px;font-size:11px;color:#000;font-family:'Liberation Sans', sans-serif;font-weight:700;letter-spacing:0.6px;">Точность</div><div class="a t" style="left:756px;top:718.04px;font-size:11px;color:#000;font-family:'Liberation Sans', sans-serif;font-weight:700;letter-spacing:0.6px;">Печать</div><div class="a t" style="left:832px;top:718.04px;font-size:11px;color:#000;font-family:'Liberation Sans', sans-serif;">Примечание</div><div class="a" style="left:45px;top:755px;width:11px;height:15px;background:#f0f0f0;"></div><div class="a t" style="left:59px;top:757.04px;font-size:11px;color:#000;font-family:'Liberation Sans', sans-serif;">7</div><div class="a t" style="left:95px;top:757.04px;font-size:11px;color:#000;font-family:'Liberation Sans', sans-serif;">СтМатПод</div><div class="a t" style="left:166px;top:757.04px;font-size:11px;color:#000;font-family:'Liberation Sans', sans-serif;">Стоимость материалов подрядчика</div><div class="a t" style="left:432px;width:80px;text-align:right;top:757.04px;font-size:11px;color:#000;font-family:'Liberation Sans', sans-serif;">195,66</div><div class="a t" style="left:513px;width:80px;text-align:right;top:757.04px;font-size:11px;color:#000;font-family:'Liberation Sans', sans-serif;">2 959,40</div><div class="a t" style="left:599px;top:757.04px;font-size:11px;color:#000;font-family:'Liberation Sans', sans-serif;width:57px;overflow:hidden;">СтМатПод</div><div class="a t" style="left:660px;top:757.04px;font-size:11px;color:#000;font-family:'Liberation Sans', sans-serif;">До 2 знаков</div><div class="a t" style="left:756px;top:757.04px;font-size:11px;color:#000;font-family:'Liberation Sans', sans-serif;">Нет</div><div class="a" style="left:45px;top:770px;width:47px;height:1px;background:#808080;"></div><div class="a" style="left:92px;top:770px;width:838px;height:1px;background:#c0c0c0;"></div><div class="a" style="left:45px;top:771px;width:11px;height:15px;background:#f0f0f0;"></div><div class="a t" style="left:59px;top:773.04px;font-size:11px;color:#000;font-family:'Liberation Sans', sans-serif;">8</div><div class="a t" style="left:95px;top:773.04px;font-size:11px;color:#000;font-family:'Liberation Sans', sans-serif;">Оборуд</div><div class="a t" style="left:166px;top:773.04px;font-size:11px;color:#000;font-family:'Liberation Sans', sans-serif;">Стоимость оборудования (всего)</div><div class="a t" style="left:432px;width:80px;text-align:right;top:773.04px;font-size:11px;color:#000;font-family:'Liberation Sans', sans-serif;">0,00</div><div class="a t" style="left:513px;width:80px;text-align:right;top:773.04px;font-size:11px;color:#000;font-family:'Liberation Sans', sans-serif;">0,00</div><div class="a t" style="left:599px;top:773.04px;font-size:11px;color:#000;font-family:'Liberation Sans', sans-serif;width:57px;overflow:hidden;">Оборуд</div><div class="a t" style="left:660px;top:773.04px;font-size:11px;color:#000;font-family:'Liberation Sans', sans-serif;">До 2 знаков</div><div class="a t" style="left:756px;top:773.04px;font-size:11px;color:#000;font-family:'Liberation Sans', sans-serif;">Нет</div><div class="a" style="left:45px;top:786px;width:47px;height:1px;background:#808080;"></div><div class="a" style="left:92px;top:786px;width:838px;height:1px;background:#c0c0c0;"></div><div class="a" style="left:45px;top:787px;width:11px;height:15px;background:#f0f0f0;"></div><div class="a t" style="left:59px;top:789.04px;font-size:11px;color:#000;font-family:'Liberation Sans', sans-serif;">9</div><div class="a t" style="left:95px;top:789.04px;font-size:11px;color:#000;font-family:'Liberation Sans', sans-serif;">ОборудЗак</div><div class="a t" style="left:166px;top:789.04px;font-size:11px;color:#000;font-family:'Liberation Sans', sans-serif;">Стоимость оборудования заказчика</div><div class="a t" style="left:432px;width:80px;text-align:right;top:789.04px;font-size:11px;color:#000;font-family:'Liberation Sans', sans-serif;">0,00</div><div class="a t" style="left:513px;width:80px;text-align:right;top:789.04px;font-size:11px;color:#000;font-family:'Liberation Sans', sans-serif;">0,00</div><div class="a t" style="left:599px;top:789.04px;font-size:11px;color:#000;font-family:'Liberation Sans', sans-serif;width:57px;overflow:hidden;">ОборудЗак</div><div class="a t" style="left:660px;top:789.04px;font-size:11px;color:#000;font-family:'Liberation Sans', sans-serif;">До 2 знаков</div><div class="a t" style="left:756px;top:789.04px;font-size:11px;color:#000;font-family:'Liberation Sans', sans-serif;">Нет</div><div class="a" style="left:45px;top:802px;width:47px;height:1px;background:#808080;"></div><div class="a" style="left:92px;top:802px;width:838px;height:1px;background:#c0c0c0;"></div><div class="a" style="left:45px;top:803px;width:11px;height:15px;background:#f0f0f0;"></div><div class="a t" style="left:59px;top:805.04px;font-size:11px;color:#000;font-family:'Liberation Sans', sans-serif;">10</div><div class="a t" style="left:95px;top:805.04px;font-size:11px;color:#000;font-family:'Liberation Sans', sans-serif;">ОборудПод</div><div class="a t" style="left:166px;top:805.04px;font-size:11px;color:#000;font-family:'Liberation Sans', sans-serif;">Стоимость оборудования подрядчика</div><div class="a t" style="left:432px;width:80px;text-align:right;top:805.04px;font-size:11px;color:#000;font-family:'Liberation Sans', sans-serif;">0,00</div><div class="a t" style="left:513px;width:80px;text-align:right;top:805.04px;font-size:11px;color:#000;font-family:'Liberation Sans', sans-serif;">0,00</div><div class="a t" style="left:599px;top:805.04px;font-size:11px;color:#000;font-family:'Liberation Sans', sans-serif;width:57px;overflow:hidden;">ОборудПод</div><div class="a t" style="left:660px;top:805.04px;font-size:11px;color:#000;font-family:'Liberation Sans', sans-serif;">До 2 знаков</div><div class="a t" style="left:756px;top:805.04px;font-size:11px;color:#000;font-family:'Liberation Sans', sans-serif;">Нет</div><div class="a" style="left:45px;top:818px;width:47px;height:1px;background:#808080;"></div><div class="a" style="left:92px;top:818px;width:838px;height:1px;background:#c0c0c0;"></div><div class="a" style="left:45px;top:819px;width:11px;height:15px;background:#f0f0f0;"></div><div class="a t" style="left:59px;top:821.04px;font-size:11px;color:#000;font-family:'Liberation Sans', sans-serif;">11</div><div class="a t" style="left:95px;top:821.04px;font-size:11px;color:#000;font-family:'Liberation Sans', sans-serif;">ЭММ</div><div class="a t" style="left:166px;top:821.04px;font-size:11px;color:#000;font-family:'Liberation Sans', sans-serif;">Эксплуатация машин</div><div class="a t" style="left:432px;width:80px;text-align:right;top:821.04px;font-size:11px;color:#000;font-family:'Liberation Sans', sans-serif;">30,91</div><div class="a t" style="left:513px;width:80px;text-align:right;top:821.04px;font-size:11px;color:#000;font-family:'Liberation Sans', sans-serif;">428,16</div><div class="a t" style="left:599px;top:821.04px;font-size:11px;color:#000;font-family:'Liberation Sans', sans-serif;width:57px;overflow:hidden;">ЭММ</div><div class="a t" style="left:660px;top:821.04px;font-size:11px;color:#000;font-family:'Liberation Sans', sans-serif;">До 2 знаков</div><div class="a t" style="left:756px;top:821.04px;font-size:11px;color:#000;font-family:'Liberation Sans', sans-serif;">Нет</div><div class="a" style="left:45px;top:834px;width:47px;height:1px;background:#808080;"></div><div class="a" style="left:92px;top:834px;width:838px;height:1px;background:#c0c0c0;"></div><div class="a" style="left:45px;top:835px;width:11px;height:15px;background:#f0f0f0;"></div><div class="a t" style="left:59px;top:837.04px;font-size:11px;color:#000;font-family:'Liberation Sans', sans-serif;">13</div><div class="a t" style="left:95px;top:837.04px;font-size:11px;color:#000;font-family:'Liberation Sans', sans-serif;">ЗПМ</div><div class="a t" style="left:166px;top:837.04px;font-size:11px;color:#000;font-family:'Liberation Sans', sans-serif;">ЗП машинистов</div><div class="a t" style="left:432px;width:80px;text-align:right;top:837.04px;font-size:11px;color:#000;font-family:'Liberation Sans', sans-serif;">2,06</div><div class="a t" style="left:513px;width:80px;text-align:right;top:837.04px;font-size:11px;color:#000;font-family:'Liberation Sans', sans-serif;">90,54</div><div class="a t" style="left:599px;top:837.04px;font-size:11px;color:#000;font-family:'Liberation Sans', sans-serif;width:57px;overflow:hidden;">ЗПМ</div><div class="a t" style="left:660px;top:837.04px;font-size:11px;color:#000;font-family:'Liberation Sans', sans-serif;">До 2 знаков</div><div class="a t" style="left:756px;top:837.04px;font-size:11px;color:#000;font-family:'Liberation Sans', sans-serif;">Нет</div><div class="a" style="left:45px;top:850px;width:47px;height:1px;background:#808080;"></div><div class="a" style="left:92px;top:850px;width:838px;height:1px;background:#c0c0c0;"></div><div class="a" style="left:45px;top:851px;width:11px;height:15px;background:#f0f0f0;"></div><div class="a t" style="left:59px;top:853.04px;font-size:11px;color:#000;font-family:'Liberation Sans', sans-serif;">14</div><div class="a t" style="left:95px;top:853.04px;font-size:11px;color:#000;font-family:'Liberation Sans', sans-serif;">ОЗП</div><div class="a t" style="left:166px;top:853.04px;font-size:11px;color:#000;font-family:'Liberation Sans', sans-serif;">Основная ЗП рабочих</div><div class="a t" style="left:432px;width:80px;text-align:right;top:853.04px;font-size:11px;color:#000;font-family:'Liberation Sans', sans-serif;">6 748,35</div><div class="a t" style="left:513px;width:80px;text-align:right;top:853.04px;font-size:11px;color:#000;font-family:'Liberation Sans', sans-serif;">259 546,65</div><div class="a t" style="left:599px;top:853.04px;font-size:11px;color:#000;font-family:'Liberation Sans', sans-serif;width:57px;overflow:hidden;">ОЗП</div><div class="a t" style="left:660px;top:853.04px;font-size:11px;color:#000;font-family:'Liberation Sans', sans-serif;">До 2 знаков</div><div class="a t" style="left:756px;top:853.04px;font-size:11px;color:#000;font-family:'Liberation Sans', sans-serif;">Нет</div><div class="a" style="left:45px;top:866px;width:47px;height:1px;background:#808080;"></div><div class="a" style="left:92px;top:866px;width:838px;height:1px;background:#c0c0c0;"></div><div class="a" style="left:45px;top:867px;width:11px;height:15px;background:#f0f0f0;"></div><div class="a t" style="left:59px;top:869.04px;font-size:11px;color:#000;font-family:'Liberation Sans', sans-serif;">16</div><div class="a t" style="left:95px;top:869.04px;font-size:11px;color:#000;font-family:'Liberation Sans', sans-serif;">Строит</div><div class="a t" style="left:166px;top:869.04px;font-size:11px;color:#000;font-family:'Liberation Sans', sans-serif;">Строительные работы с НР и СП</div><div class="a t" style="left:432px;width:80px;text-align:right;top:869.04px;font-size:11px;color:#000;font-family:'Liberation Sans', sans-serif;">308,40</div><div class="a t" style="left:513px;width:80px;text-align:right;top:869.04px;font-size:11px;color:#000;font-family:'Liberation Sans', sans-serif;">13 146,28</div><div class="a t" style="left:599px;top:869.04px;font-size:11px;color:#000;font-family:'Liberation Sans', sans-serif;width:57px;overflow:hidden;">Строит</div><div class="a t" style="left:660px;top:869.04px;font-size:11px;color:#000;font-family:'Liberation Sans', sans-serif;">До 2 знаков</div><div class="a t" style="left:756px;top:869.04px;font-size:11px;color:#000;font-family:'Liberation Sans', sans-serif;">Нет</div><div class="a" style="left:45px;top:882px;width:47px;height:1px;background:#808080;"></div><div class="a" style="left:92px;top:882px;width:838px;height:1px;background:#c0c0c0;"></div><div class="a" style="left:45px;top:883px;width:11px;height:15px;background:#f0f0f0;"></div><div class="a t" style="left:59px;top:885.04px;font-size:11px;color:#000;font-family:'Liberation Sans', sans-serif;">17</div><div class="a t" style="left:95px;top:885.04px;font-size:11px;color:#000;font-family:'Liberation Sans', sans-serif;">Монтаж</div><div class="a t" style="left:166px;top:885.04px;font-size:11px;color:#000;font-family:'Liberation Sans', sans-serif;">Монтажные работы с НР и СП</div><div class="a t" style="left:432px;width:80px;text-align:right;top:885.04px;font-size:11px;color:#000;font-family:'Liberation Sans', sans-serif;">0,00</div><div class="a t" style="left:513px;width:80px;text-align:right;top:885.04px;font-size:11px;color:#000;font-family:'Liberation Sans', sans-serif;">0,00</div><div class="a t" style="left:599px;top:885.04px;font-size:11px;color:#000;font-family:'Liberation Sans', sans-serif;width:57px;overflow:hidden;">Монтажн</div><div class="a t" style="left:660px;top:885.04px;font-size:11px;color:#000;font-family:'Liberation Sans', sans-serif;">До 2 знаков</div><div class="a t" style="left:756px;top:885.04px;font-size:11px;color:#000;font-family:'Liberation Sans', sans-serif;">Нет</div><div class="a" style="left:45px;top:898px;width:47px;height:1px;background:#808080;"></div><div class="a" style="left:92px;top:898px;width:838px;height:1px;background:#c0c0c0;"></div><div class="a" style="left:45px;top:899px;width:11px;height:15px;background:#f0f0f0;"></div><div class="a t" style="left:59px;top:901.04px;font-size:11px;color:#000;font-family:'Liberation Sans', sans-serif;">18</div><div class="a t" style="left:95px;top:901.04px;font-size:11px;color:#000;font-family:'Liberation Sans', sans-serif;">Прочие</div><div class="a t" style="left:166px;top:901.04px;font-size:11px;color:#000;font-family:'Liberation Sans', sans-serif;">Прочие работы с НР и СП</div><div class="a t" style="left:432px;width:80px;text-align:right;top:901.04px;font-size:11px;color:#000;font-family:'Liberation Sans', sans-serif;">6 666,52</div><div class="a t" style="left:513px;width:80px;text-align:right;top:901.04px;font-size:11px;color:#000;font-family:'Liberation Sans', sans-serif;">627 512,87</div><div class="a t" style="left:599px;top:901.04px;font-size:11px;color:#000;font-family:'Liberation Sans', sans-serif;width:57px;overflow:hidden;">Прочие</div><div class="a t" style="left:660px;top:901.04px;font-size:11px;color:#000;font-family:'Liberation Sans', sans-serif;">До 2 знаков</div><div class="a t" style="left:756px;top:901.04px;font-size:11px;color:#000;font-family:'Liberation Sans', sans-serif;">Нет</div><div class="a" style="left:45px;top:914px;width:47px;height:1px;background:#808080;"></div><div class="a" style="left:92px;top:914px;width:838px;height:1px;background:#c0c0c0;"></div><div class="a" style="left:45px;top:915px;width:11px;height:15px;background:#f0f0f0;"></div><div class="a t" style="left:59px;top:917.04px;font-size:11px;color:#000;font-family:'Liberation Sans', sans-serif;">20</div><div class="a t" style="left:95px;top:917.04px;font-size:11px;color:#000;font-family:'Liberation Sans', sans-serif;">ВозврМат</div><div class="a t" style="left:166px;top:917.04px;font-size:11px;color:#000;font-family:'Liberation Sans', sans-serif;">Возврат материалов</div><div class="a t" style="left:432px;width:80px;text-align:right;top:917.04px;font-size:11px;color:#000;font-family:'Liberation Sans', sans-serif;">0,00</div><div class="a t" style="left:513px;width:80px;text-align:right;top:917.04px;font-size:11px;color:#000;font-family:'Liberation Sans', sans-serif;">0,00</div><div class="a t" style="left:599px;top:917.04px;font-size:11px;color:#000;font-family:'Liberation Sans', sans-serif;width:57px;overflow:hidden;">ВозврМат</div><div class="a t" style="left:660px;top:917.04px;font-size:11px;color:#000;font-family:'Liberation Sans', sans-serif;">До 2 знаков</div><div class="a t" style="left:756px;top:917.04px;font-size:11px;color:#000;font-family:'Liberation Sans', sans-serif;">Нет</div><div class="a" style="left:45px;top:930px;width:47px;height:1px;background:#808080;"></div><div class="a" style="left:92px;top:930px;width:838px;height:1px;background:#c0c0c0;"></div><div class="a" style="left:45px;top:931px;width:11px;height:15px;background:#f0f0f0;"></div><div class="a t" style="left:59px;top:933.04px;font-size:11px;color:#000;font-family:'Liberation Sans', sans-serif;">21</div><div class="a t" style="left:95px;top:933.04px;font-size:11px;color:#000;font-family:'Liberation Sans', sans-serif;">ТрудСтр</div><div class="a t" style="left:166px;top:933.04px;font-size:11px;color:#000;font-family:'Liberation Sans', sans-serif;">Трудозатраты строителей</div><div class="a t" style="left:432px;width:80px;text-align:right;top:933.04px;font-size:11px;color:#000;font-family:'Liberation Sans', sans-serif;">434,7577</div><div class="a t" style="left:513px;width:80px;text-align:right;top:933.04px;font-size:11px;color:#000;font-family:'Liberation Sans', sans-serif;">435,3493684</div><div class="a t" style="left:599px;top:933.04px;font-size:11px;color:#000;font-family:'Liberation Sans', sans-serif;width:57px;overflow:hidden;">ТрудСтр</div><div class="a t" style="left:660px;top:933.04px;font-size:11px;color:#000;font-family:'Liberation Sans', sans-serif;">Без округления</div><div class="a t" style="left:756px;top:933.04px;font-size:11px;color:#000;font-family:'Liberation Sans', sans-serif;">Нет</div><div class="a" style="left:45px;top:946px;width:47px;height:1px;background:#808080;"></div><div class="a" style="left:92px;top:946px;width:838px;height:1px;background:#c0c0c0;"></div><div class="a" style="left:45px;top:947px;width:11px;height:15px;background:#f0f0f0;"></div><div class="a t" style="left:59px;top:949.04px;font-size:11px;color:#000;font-family:'Liberation Sans', sans-serif;">22</div><div class="a t" style="left:95px;top:949.04px;font-size:11px;color:#000;font-family:'Liberation Sans', sans-serif;">ТрудМаш</div><div class="a t" style="left:166px;top:949.04px;font-size:11px;color:#000;font-family:'Liberation Sans', sans-serif;">Трудозатраты машинистов</div><div class="a t" style="left:432px;width:80px;text-align:right;top:949.04px;font-size:11px;color:#000;font-family:'Liberation Sans', sans-serif;">0</div><div class="a t" style="left:513px;width:80px;text-align:right;top:949.04px;font-size:11px;color:#000;font-family:'Liberation Sans', sans-serif;">0</div><div class="a t" style="left:599px;top:949.04px;font-size:11px;color:#000;font-family:'Liberation Sans', sans-serif;width:57px;overflow:hidden;">ТрудМаш</div><div class="a t" style="left:660px;top:949.04px;font-size:11px;color:#000;font-family:'Liberation Sans', sans-serif;">Без округления</div><div class="a t" style="left:756px;top:949.04px;font-size:11px;color:#000;font-family:'Liberation Sans', sans-serif;">Нет</div><div class="a" style="left:45px;top:962px;width:47px;height:1px;background:#808080;"></div><div class="a" style="left:92px;top:962px;width:838px;height:1px;background:#c0c0c0;"></div><div class="a" style="left:45px;top:963px;width:11px;height:15px;background:#f0f0f0;"></div><div class="a t" style="left:59px;top:965.04px;font-size:11px;color:#000;font-family:'Liberation Sans', sans-serif;">23</div><div class="a t" style="left:95px;top:965.04px;font-size:11px;color:#000;font-family:'Liberation Sans', sans-serif;">ТранспМат</div><div class="a t" style="left:166px;top:965.04px;font-size:11px;color:#000;font-family:'Liberation Sans', sans-serif;">Транспорт материалов</div><div class="a t" style="left:432px;width:80px;text-align:right;top:965.04px;font-size:11px;color:#000;font-family:'Liberation Sans', sans-serif;">0,00</div><div class="a t" style="left:513px;width:80px;text-align:right;top:965.04px;font-size:11px;color:#000;font-family:'Liberation Sans', sans-serif;">0,00</div><div class="a t" style="left:599px;top:965.04px;font-size:11px;color:#000;font-family:'Liberation Sans', sans-serif;width:57px;overflow:hidden;">ТранспМат</div><div class="a t" style="left:660px;top:965.04px;font-size:11px;color:#000;font-family:'Liberation Sans', sans-serif;">До 2 знаков</div><div class="a t" style="left:756px;top:965.04px;font-size:11px;color:#000;font-family:'Liberation Sans', sans-serif;">Нет</div><div class="a" style="left:45px;top:978px;width:47px;height:1px;background:#808080;"></div><div class="a" style="left:92px;top:978px;width:838px;height:1px;background:#c0c0c0;"></div><div class="a" style="left:45px;top:979px;width:11px;height:15px;background:#f0f0f0;"></div><div class="a t" style="left:59px;top:981.04px;font-size:11px;color:#000;font-family:'Liberation Sans', sans-serif;">24</div><div class="a t" style="left:95px;top:981.04px;font-size:11px;color:#000;font-family:'Liberation Sans', sans-serif;">Перевозка</div><div class="a t" style="left:166px;top:981.04px;font-size:11px;color:#000;font-family:'Liberation Sans', sans-serif;">Перевозка грузов</div><div class="a t" style="left:432px;width:80px;text-align:right;top:981.04px;font-size:11px;color:#000;font-family:'Liberation Sans', sans-serif;">0,00</div><div class="a t" style="left:513px;width:80px;text-align:right;top:981.04px;font-size:11px;color:#000;font-family:'Liberation Sans', sans-serif;">0,00</div><div class="a t" style="left:599px;top:981.04px;font-size:11px;color:#000;font-family:'Liberation Sans', sans-serif;width:57px;overflow:hidden;">Перевозка</div><div class="a t" style="left:660px;top:981.04px;font-size:11px;color:#000;font-family:'Liberation Sans', sans-serif;">До 2 знаков</div><div class="a t" style="left:756px;top:981.04px;font-size:11px;color:#000;font-family:'Liberation Sans', sans-serif;">Нет</div><div class="a" style="left:45px;top:994px;width:47px;height:1px;background:#808080;"></div><div class="a" style="left:92px;top:994px;width:838px;height:1px;background:#c0c0c0;"></div><div class="a" style="left:45px;top:995px;width:11px;height:15px;background:#f0f0f0;"></div><div class="a t" style="left:59px;top:997.04px;font-size:11px;color:#000;font-family:'Liberation Sans', sans-serif;">25</div><div class="a t" style="left:95px;top:997.04px;font-size:11px;color:#000;font-family:'Liberation Sans', sans-serif;">НР</div><div class="a t" style="left:166px;top:997.04px;font-size:11px;color:#000;font-family:'Liberation Sans', sans-serif;">Накладные расходы</div><div class="a t" style="left:432px;width:80px;text-align:right;top:997.04px;font-size:11px;color:#000;font-family:'Liberation Sans', sans-serif;">0,00</div><div class="a t" style="left:513px;width:80px;text-align:right;top:997.04px;font-size:11px;color:#000;font-family:'Liberation Sans', sans-serif;">195 765,25</div><div class="a t" style="left:599px;top:997.04px;font-size:11px;color:#000;font-family:'Liberation Sans', sans-serif;width:57px;overflow:hidden;">НР</div><div class="a t" style="left:660px;top:997.04px;font-size:11px;color:#000;font-family:'Liberation Sans', sans-serif;">До 2 знаков</div><div class="a t" style="left:756px;top:997.04px;font-size:11px;color:#000;font-family:'Liberation Sans', sans-serif;">Нет</div><div class="a" style="left:45px;top:1010px;width:47px;height:1px;background:#808080;"></div><div class="a" style="left:92px;top:1010px;width:838px;height:1px;background:#c0c0c0;"></div><div class="a" style="left:45px;top:1011px;width:11px;height:15px;background:#f0f0f0;"></div><div class="a t" style="left:59px;top:1013.04px;font-size:11px;color:#000;font-family:'Liberation Sans', sans-serif;">26</div><div class="a t" style="left:95px;top:1013.04px;font-size:11px;color:#000;font-family:'Liberation Sans', sans-serif;">СмПриб</div><div class="a t" style="left:166px;top:1013.04px;font-size:11px;color:#000;font-family:'Liberation Sans', sans-serif;">Сметная прибыль</div><div class="a t" style="left:432px;width:80px;text-align:right;top:1013.04px;font-size:11px;color:#000;font-family:'Liberation Sans', sans-serif;">0,00</div><div class="a t" style="left:513px;width:80px;text-align:right;top:1013.04px;font-size:11px;color:#000;font-family:'Liberation Sans', sans-serif;">181 959,69</div><div class="a t" style="left:599px;top:1013.04px;font-size:11px;color:#000;font-family:'Liberation Sans', sans-serif;width:57px;overflow:hidden;">СмПриб</div><div class="a t" style="left:660px;top:1013.04px;font-size:11px;color:#000;font-family:'Liberation Sans', sans-serif;">До 2 знаков</div><div class="a t" style="left:756px;top:1013.04px;font-size:11px;color:#000;font-family:'Liberation Sans', sans-serif;">Нет</div><div class="a" style="left:45px;top:1026px;width:47px;height:1px;background:#808080;"></div><div class="a" style="left:92px;top:1026px;width:838px;height:1px;background:#c0c0c0;"></div><div class="a" style="left:45px;top:1027px;width:11px;height:15px;background:#f0f0f0;"></div><div class="a t" style="left:59px;top:1029.05px;font-size:11px;color:#000;font-family:'Liberation Sans', sans-serif;">27</div><div class="a t" style="left:95px;top:1029.05px;font-size:11px;color:#000;font-family:'Liberation Sans', sans-serif;">Всего</div><div class="a t" style="left:166px;top:1029.05px;font-size:11px;color:#000;font-family:'Liberation Sans', sans-serif;">Всего с НР и СП</div><div class="a t" style="left:432px;width:80px;text-align:right;top:1029.05px;font-size:11px;color:#000;font-family:'Liberation Sans', sans-serif;">6 974,92</div><div class="a t" style="left:513px;width:80px;text-align:right;top:1029.05px;font-size:11px;color:#000;font-family:'Liberation Sans', sans-serif;">640 659,15</div><div class="a t" style="left:599px;top:1029.05px;font-size:11px;color:#000;font-family:'Liberation Sans', sans-serif;width:57px;overflow:hidden;">Всего</div><div class="a t" style="left:660px;top:1029.05px;font-size:11px;color:#000;font-family:'Liberation Sans', sans-serif;">До 2 знаков</div><div class="a t" style="left:756px;top:1029.05px;font-size:11px;color:#000;font-family:'Liberation Sans', sans-serif;">Нет</div><div class="a" style="left:45px;top:1042px;width:47px;height:1px;background:#808080;"></div><div class="a" style="left:92px;top:1042px;width:838px;height:1px;background:#c0c0c0;"></div><div class="a" style="left:45px;top:1043px;width:11px;height:15px;background:#f0f0f0;"></div><div class="a" style="left:57px;top:1043px;width:873px;height:15px;background:#e6fcfc;"></div><div class="a t" style="left:59px;top:1045.05px;font-size:11px;color:#000;font-family:'Liberation Sans', sans-serif;">28</div><div class="a t" style="left:95px;top:1045.05px;font-size:11px;color:#000;font-family:'Liberation Sans', sans-serif;">НДС</div><div class="a t" style="left:166px;top:1045.05px;font-size:11px;color:#000;font-family:'Liberation Sans', sans-serif;">НДС, 20%</div><div class="a t" style="left:432px;width:80px;text-align:right;top:1045.05px;font-size:11px;color:#000;font-family:'Liberation Sans', sans-serif;">1 394,98</div><div class="a t" style="left:513px;width:80px;text-align:right;top:1045.05px;font-size:11px;color:#000;font-family:'Liberation Sans', sans-serif;">128 131,83</div><div class="a t" style="left:599px;top:1045.05px;font-size:11px;color:#000;font-family:'Liberation Sans', sans-serif;width:57px;overflow:hidden;"></div><div class="a t" style="left:660px;top:1045.05px;font-size:11px;color:#000;font-family:'Liberation Sans', sans-serif;">До 2 знаков</div><div class="a t" style="left:756px;top:1045.05px;font-size:11px;color:#000;font-family:'Liberation Sans', sans-serif;">Да</div><svg class="a" style="left:508px;top:1043px" width="7" height="7" viewBox="0 0 7 7"><path d="M0 0 H7 V7Z" fill="#20a020"/></svg><div class="a" style="left:45px;top:1058px;width:47px;height:1px;background:#808080;"></div><div class="a" style="left:92px;top:1058px;width:838px;height:1px;background:#c0c0c0;"></div><div class="a" style="left:45px;top:1059px;width:11px;height:15px;background:#f0f0f0;"></div><div class="a" style="left:57px;top:1059px;width:873px;height:15px;background:#e6fcfc;"></div><div class="a" style="left:830px;top:1059px;width:99px;height:15px;background:#0078d7;outline:1px dotted #e0a040;outline-offset:-1px;"></div><svg class="a" style="left:47px;top:1061px" width="8" height="11" viewBox="0 0 8 11"><path d="M1 0.5 L6.5 5.5 L1 10.5Z" fill="#000"/></svg><div class="a t" style="left:59px;top:1061.05px;font-size:11px;color:#000;font-family:'Liberation Sans', sans-serif;">29</div><div class="a t" style="left:95px;top:1061.05px;font-size:11px;color:#000;font-family:'Liberation Sans', sans-serif;">Итого с НДС</div><div class="a t" style="left:166px;top:1061.05px;font-size:11px;color:#000;font-family:'Liberation Sans', sans-serif;">Итого по смете с НДС 20%</div><div class="a t" style="left:432px;width:80px;text-align:right;top:1061.05px;font-size:11px;color:#000;font-family:'Liberation Sans', sans-serif;">8 369,90</div><div class="a t" style="left:513px;width:80px;text-align:right;top:1061.05px;font-size:11px;color:#000;font-family:'Liberation Sans', sans-serif;">768 790,98</div><div class="a t" style="left:599px;top:1061.05px;font-size:11px;color:#000;font-family:'Liberation Sans', sans-serif;width:57px;overflow:hidden;">Итого</div><div class="a t" style="left:660px;top:1061.05px;font-size:11px;color:#000;font-family:'Liberation Sans', sans-serif;">До 2 знаков</div><div class="a t" style="left:756px;top:1061.05px;font-size:11px;color:#000;font-family:'Liberation Sans', sans-serif;">Да</div><svg class="a" style="left:508px;top:1059px" width="7" height="7" viewBox="0 0 7 7"><path d="M0 0 H7 V7Z" fill="#20a020"/></svg><div class="a" style="left:45px;top:1074px;width:47px;height:1px;background:#808080;"></div><div class="a" style="left:92px;top:1074px;width:838px;height:1px;background:#c0c0c0;"></div><div class="a" style="left:56px;top:754px;width:1px;height:320px;background:#808080;"></div><div class="a" style="left:92px;top:754px;width:1px;height:320px;background:#c0c0c0;"></div><div class="a" style="left:163px;top:754px;width:1px;height:320px;background:#c0c0c0;"></div><div class="a" style="left:434px;top:754px;width:1px;height:320px;background:#c0c0c0;"></div><div class="a" style="left:515px;top:754px;width:1px;height:320px;background:#c0c0c0;"></div><div class="a" style="left:596px;top:754px;width:1px;height:320px;background:#c0c0c0;"></div><div class="a" style="left:657px;top:754px;width:1px;height:320px;background:#c0c0c0;"></div><div class="a" style="left:753px;top:754px;width:1px;height:320px;background:#c0c0c0;"></div><div class="a" style="left:829px;top:754px;width:1px;height:320px;background:#c0c0c0;"></div><div class="a" style="left:930px;top:754px;width:1px;height:320px;background:#c0c0c0;"></div><div class="a" style="left:56px;top:754px;width:1px;height:320px;background:#808080;"></div><div class="a" style="left:92px;top:754px;width:1px;height:320px;background:#a0a0a0;"></div><div class="a" style="left:1730px;top:693px;width:15px;height:393px;background:#f0f0f0;"></div><svg class="a" style="left:1731px;top:697px" width="13" height="10" viewBox="0 0 13 10"><path d="M2.5 7 L6.5 3 L10.5 7" stroke="#505050" stroke-width="2" fill="none"/></svg><div class="a" style="left:1730px;top:994px;width:15px;height:75px;background:#cdcdcd;"></div><svg class="a" style="left:1731px;top:1073px" width="13" height="10" viewBox="0 0 13 10"><path d="M2.5 3 L6.5 7 L10.5 3" stroke="#505050" stroke-width="2" fill="none"/></svg><div class="a" style="left:1745px;top:689px;width:1px;height:401px;background:#fff;"></div><div class="a" style="left:1750px;top:688px;width:1px;height:402px;background:#808080;"></div><div class="a" style="left:13px;top:1089px;width:1738px;height:2px;background:#808080;"></div><div class="a" style="left:44px;top:1086px;width:1702px;height:1px;background:#f0f0f0;"></div><div class="a" style="left:2px;top:1091px;width:1749px;height:1px;background:#fff;"></div><div class="a" style="left:3px;top:1094px;width:86px;height:28px;background:#f0f0f0;border-top:1px solid #a0a0a0;border-left:1px solid #a0a0a0;border-right:1px solid #fff;border-bottom:1px solid #fff;box-sizing:border-box;"></div><div class="a" style="left:91px;top:1094px;width:298px;height:28px;background:#f0f0f0;border-top:1px solid #a0a0a0;border-left:1px solid #a0a0a0;border-right:1px solid #fff;border-bottom:1px solid #fff;box-sizing:border-box;"></div><div class="a" style="left:391px;top:1094px;width:1291px;height:28px;background:#f0f0f0;border-top:1px solid #a0a0a0;border-left:1px solid #a0a0a0;border-right:1px solid #fff;border-bottom:1px solid #fff;box-sizing:border-box;"></div><div class="a" style="left:1684px;top:1094px;width:32px;height:28px;background:#f0f0f0;border-top:1px solid #a0a0a0;border-left:1px solid #a0a0a0;border-right:1px solid #fff;border-bottom:1px solid #fff;box-sizing:border-box;"></div><div class="a" style="left:1718px;top:1094px;width:32px;height:28px;background:#f0f0f0;border-top:1px solid #a0a0a0;border-left:1px solid #a0a0a0;border-right:1px solid #fff;border-bottom:1px solid #fff;box-sizing:border-box;"></div><div class="a t" style="left:397px;top:1101.82px;font-size:11.25px;color:#000;font-family:'Liberation Sans', sans-serif;letter-spacing:0.4px;">ИТОГО (руб)</div><div class="a t" style="left:473px;top:1101.82px;font-size:11.25px;color:#000;font-family:'Liberation Sans', sans-serif;">По разделу: 6 974,92 / 640 659,15</div><div class="a t" style="left:663px;top:1101.82px;font-size:11.25px;color:#000;font-family:'Liberation Sans', sans-serif;">По ЛС: 6 974,92 / 640 659,15</div><div class="a t" style="left:826px;top:1101.82px;font-size:11.25px;color:#000;font-family:'Liberation Sans', sans-serif;">По объекту: 8 369,9 / 768 790,98</div><svg class="a" style="left:1691px;top:1099px" width="18" height="18" viewBox="0 0 18 18"><circle cx="9" cy="9" r="8.3" fill="#0a74d8"/><rect x="7.6" y="7.5" width="2.8" height="7" fill="#fff"/><circle cx="9" cy="5" r="1.5" fill="#fff"/></svg><div class="a t" style="left:1726px;top:1102.05px;font-size:11px;color:#000;font-family:'Liberation Sans', sans-serif;">RU</div><svg class="a" style="left:0px;top:0px" width="1753" height="1125" viewBox="0 0 1753 1125"><rect x="434.5" y="1058.5" width="221" height="15" fill="none" stroke="#ff0000" stroke-width="3"/><path d="M535.5 1058 L298.5 124" stroke="#ff0000" stroke-width="3" fill="none"/><path d="M293 102 L290.5 125.5 L307 123Z" fill="#ff0000"/></svg></body></html>
